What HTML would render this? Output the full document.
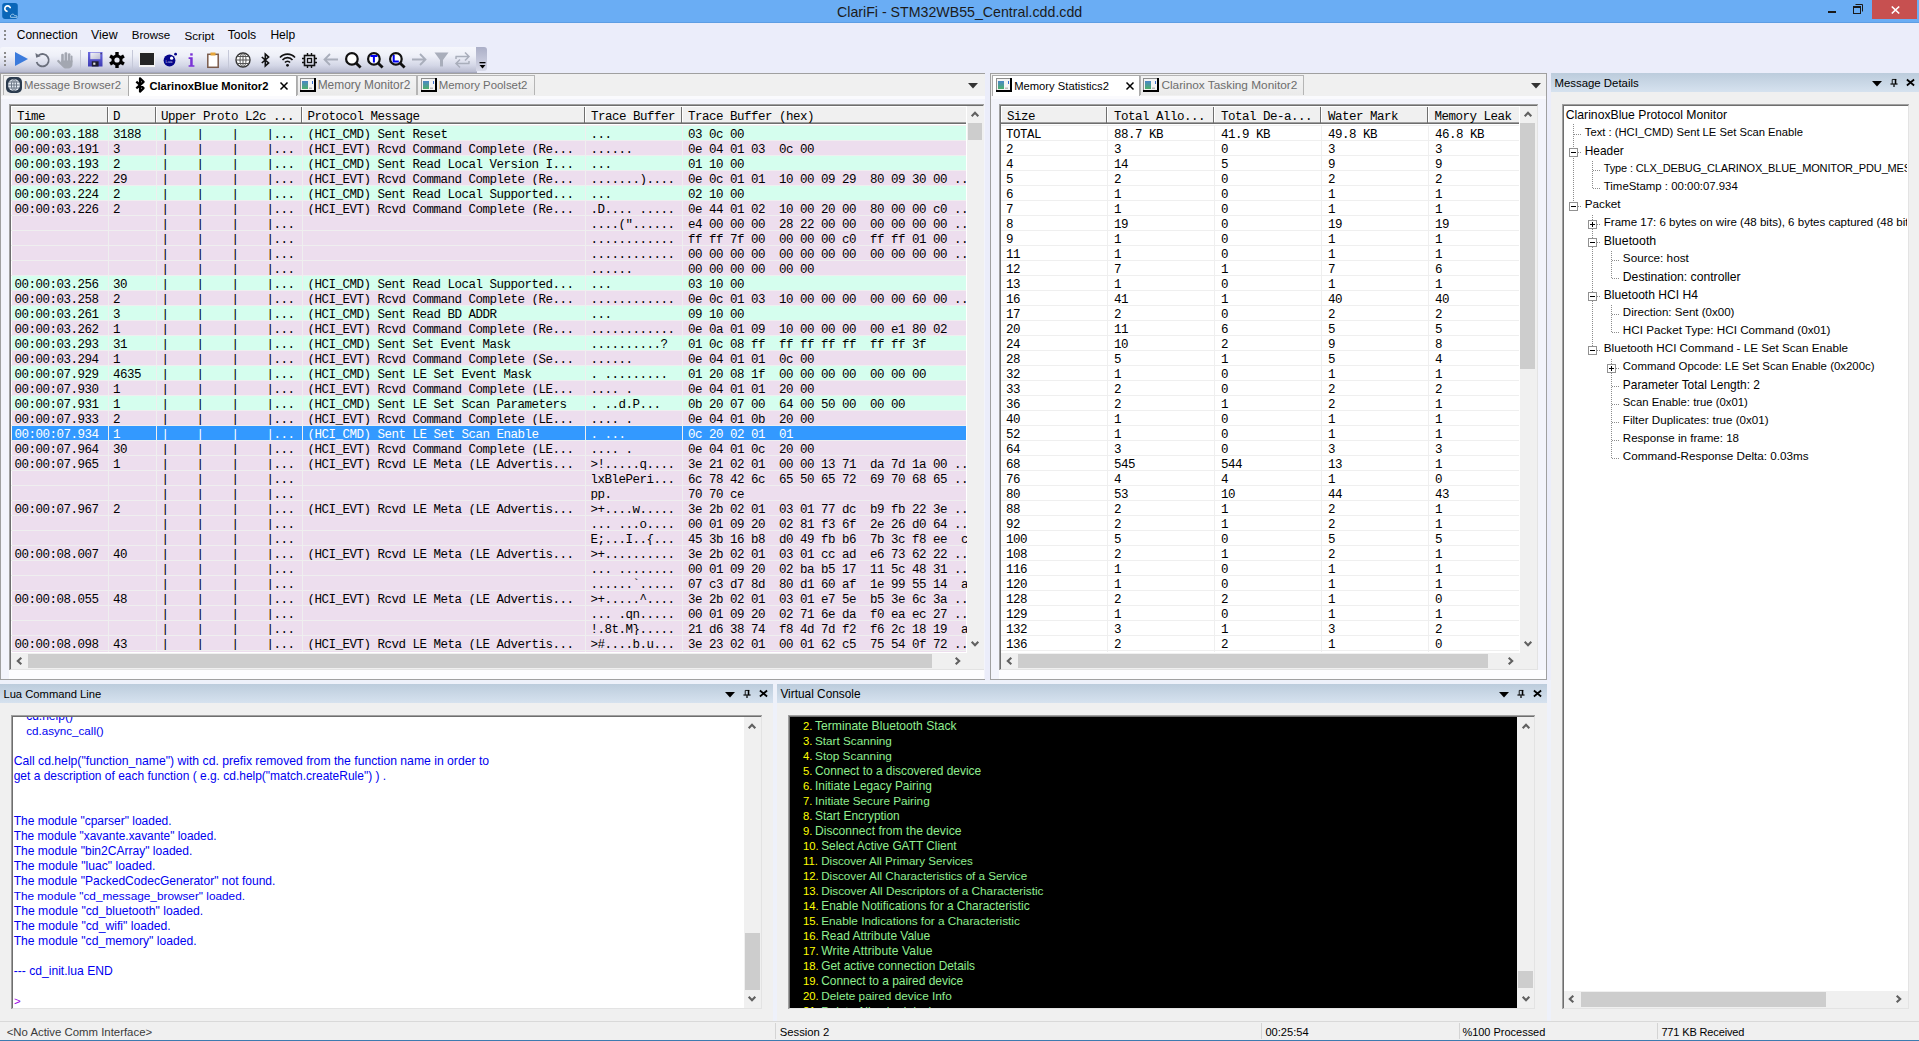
<!DOCTYPE html><html><head><meta charset="utf-8"><title>ClariFi</title><style>
*{box-sizing:border-box}
html,body{margin:0;padding:0}
body{width:1919px;height:1041px;position:relative;overflow:hidden;background:#EBEDFA;font-family:"Liberation Sans",sans-serif;font-size:12px;color:#000}
.a{position:absolute}
.t{position:absolute;white-space:pre;line-height:15px}
.m{position:absolute;font-family:"Liberation Mono",monospace;font-size:12.5px;letter-spacing:-0.5px;white-space:pre;line-height:15px}
svg{position:absolute;overflow:visible}
</style></head><body>
<div class="a" style="left:0px;top:0px;width:1919px;height:23px;background:#6AADF4"></div>
<div class="a" style="left:0px;top:22px;width:1919px;height:1px;background:#5D9EE4"></div>
<svg style="left:2px;top:3px" width="16" height="16" viewBox="0 0 16 16"><rect x="0.2" y="0" width="15.6" height="15.9" rx="2.8" fill="#0A66B8"/><path d="M8.2 4.5 A2.8 2.8 0 1 0 4.9 8.3" stroke="#fff" stroke-width="1.7" fill="none" stroke-linecap="round"/><path d="M8.6 14.3 H15 a1.3 1.3 0 0 0 -1.2 -1.7 H12.6 a2 2.2 0 0 0 -3.2 -0.9 a1.9 1.9 0 0 0 -0.8 2.6z" stroke="#9CC8EA" stroke-width="1" fill="none"/></svg>
<div class="t" style="left:837px;top:4px;font-size:14.2px;line-height:16px;color:#1B1B1B">ClariFi - STM32WB55_Central.cdd.cdd</div>
<div class="a" style="left:1828px;top:11px;width:8px;height:2px;background:#1A1A1A"></div>
<svg style="left:1853px;top:4px" width="11" height="11" viewBox="0 0 11 11"><rect x="0.5" y="2.5" width="7" height="7" fill="none" stroke="#1A1A1A" stroke-width="1"/><rect x="0.5" y="2.5" width="7" height="1.5" fill="#1A1A1A"/><path d="M2.5 0.5 H9.5 V7.5" fill="none" stroke="#1A1A1A" stroke-width="1"/></svg>
<div class="a" style="left:1872px;top:0px;width:45px;height:19px;background:#C75050"></div>
<svg style="left:1891px;top:6px" width="9" height="8" viewBox="0 0 9 8"><path d="M0.8 0.5 L8.2 7.5 M8.2 0.5 L0.8 7.5" stroke="#fff" stroke-width="1.7"/></svg>
<div class="a" style="left:0px;top:23px;width:1919px;height:24px;background:#EBEDFA"></div>
<div class="a" style="left:4px;top:30px;width:2px;height:2px;background:#8A8A8A"></div>
<div class="a" style="left:4px;top:34px;width:2px;height:2px;background:#8A8A8A"></div>
<div class="a" style="left:4px;top:38px;width:2px;height:2px;background:#8A8A8A"></div>
<div class="t" style="left:16.7px;top:28px;font-size:12.05px;letter-spacing:0.0px;line-height:15px;color:#000">Connection</div>
<div class="t" style="left:91.1px;top:28px;font-size:12.3px;letter-spacing:0.016px;line-height:15px;color:#000">View</div>
<div class="t" style="left:131.7px;top:28px;font-size:11.55px;letter-spacing:0.0px;line-height:15px;color:#000">Browse</div>
<div class="t" style="left:184.4px;top:28px;font-size:11.67px;letter-spacing:0.0px;line-height:15px;color:#000">Script</div>
<div class="t" style="left:227.7px;top:28px;font-size:12.22px;letter-spacing:0.0px;line-height:15px;color:#000">Tools</div>
<div class="t" style="left:270.4px;top:28px;font-size:12.06px;letter-spacing:0.0px;line-height:15px;color:#000">Help</div>
<div class="a" style="left:0;top:47px;width:477px;height:26px;border-radius:3px 0 0 0;background:linear-gradient(#F6F7FC 0%,#EEF0F8 35%,#D3D6E6 75%,#B8BBCF 100%);border-bottom:1px solid #A5A8BE"></div>
<div class="a" style="left:476px;top:47px;width:11px;height:24px;border-radius:0 3px 3px 0;background:linear-gradient(#ABAFC7,#D8DAE9)"></div>
<svg style="left:479px;top:62px" width="7" height="7" viewBox="0 0 7 7"><rect x="0.5" y="0" width="6" height="1.3" fill="#000"/><path d="M0.5 3 H6.5 L3.5 6.5z" fill="#000"/></svg>
<div class="a" style="left:4px;top:52px;width:2px;height:2px;background:#8A8A8A"></div>
<div class="a" style="left:4px;top:56px;width:2px;height:2px;background:#8A8A8A"></div>
<div class="a" style="left:4px;top:60px;width:2px;height:2px;background:#8A8A8A"></div>
<div class="a" style="left:4px;top:64px;width:2px;height:2px;background:#8A8A8A"></div>
<div class="a" style="left:80px;top:50px;width:1px;height:19px;background:#C5C8D8"></div>
<div class="a" style="left:132px;top:50px;width:1px;height:19px;background:#C5C8D8"></div>
<div class="a" style="left:228px;top:50px;width:1px;height:19px;background:#C5C8D8"></div>
<svg style="left:15px;top:52px" width="13" height="14" viewBox="0 0 13 14"><path d="M0 0 L13 7 L0 14z" fill="#3B7BDC"/></svg>
<svg style="left:35px;top:52px" width="15" height="16" viewBox="0 0 15 16"><path d="M3.6 3.4 A6.2 6.2 0 1 1 1.6 10" stroke="#6A6F7C" stroke-width="1.8" fill="none"/><path d="M0.4 1 L1.2 5.8 L5.6 4.2z" fill="#6A6F7C"/></svg>
<svg style="left:57px;top:52px" width="16" height="17" viewBox="0 0 16 17"><g fill="#A3A7B1"><rect x="4.2" y="1.8" width="2.6" height="9" rx="1.2"/><rect x="7.5" y="0.2" width="2.8" height="10" rx="1.3"/><rect x="11" y="1.2" width="2.4" height="9" rx="1.1"/><rect x="13.6" y="3.6" width="1.9" height="7" rx="0.9"/><path d="M4.2 8.5 H15.5 V12.2 a4.3 4.3 0 0 1 -4.3 4.3 H8.6 a3 3 0 0 1 -2.5 -1.3 L0.4 9.7 a1.1 1.1 0 0 1 1.7 -1.4 L4.2 10.6z"/></g></svg>
<svg style="left:88px;top:52px" width="15" height="15" viewBox="0 0 15 15"><defs><linearGradient id="fl" x1="0" y1="0" x2="1" y2="1"><stop offset="0" stop-color="#F4F4FA"/><stop offset="1" stop-color="#B8BAD0"/></linearGradient><linearGradient id="fb" x1="0" y1="0" x2="0" y2="1"><stop offset="0" stop-color="#6A68E0"/><stop offset="1" stop-color="#3E3CB4"/></linearGradient></defs><rect x="0" y="0" width="14.5" height="14.5" fill="url(#fb)"/><rect x="2.3" y="0.6" width="10" height="6.6" fill="url(#fl)"/><rect x="12.6" y="1.2" width="1" height="1" fill="#222"/><rect x="3.8" y="9.3" width="6.8" height="5.2" fill="#1E1E2E"/><rect x="5.2" y="10.6" width="2.2" height="2.2" fill="#E0E0E0"/></svg>
<svg style="left:109px;top:52px" width="16" height="16" viewBox="0 0 16 16"><g fill="#000"><circle cx="8" cy="8" r="5.5"/><rect x="6.3" y="0" width="3.4" height="16"/><rect x="6.3" y="0" width="3.4" height="16" transform="rotate(60 8 8)"/><rect x="6.3" y="0" width="3.4" height="16" transform="rotate(-60 8 8)"/></g><circle cx="8" cy="8" r="2.6" fill="#E8EAF4"/></svg>
<svg style="left:139px;top:52px" width="16" height="15" viewBox="0 0 16 15"><rect x="0" y="0" width="16" height="15" fill="#F4F4F4"/><rect x="1" y="1" width="14" height="12" fill="#252525"/></svg>
<svg style="left:163px;top:52px" width="15" height="15" viewBox="0 0 15 15"><circle cx="6.5" cy="8.5" r="5.9" fill="#06068A"/><circle cx="8.6" cy="6.2" r="1.6" fill="#fff"/><circle cx="12.6" cy="2.2" r="1.4" fill="#06068A"/><text x="2.4" y="11.3" font-size="4.2" fill="#C8C8F0" font-family="Liberation Sans">Lua</text></svg>
<svg style="left:188px;top:53px" width="7" height="14" viewBox="0 0 7 14"><rect x="2.2" y="0.3" width="2.5" height="2.3" fill="#7A32D6"/><path d="M0.6 4.3 H4.7 V12.2 H6.4 V13.8 H0.6 V12.2 H2.2 V5.9 H0.6z" fill="#7A32D6"/></svg>
<svg style="left:207px;top:52px" width="12" height="16" viewBox="0 0 12 16"><rect x="0.8" y="2.3" width="10.4" height="13" fill="#fff" stroke="#7A5A4A" stroke-width="1.5"/><rect x="3.5" y="0.5" width="5" height="3" fill="#E6A63A"/></svg>
<svg style="left:235px;top:52px" width="16" height="16" viewBox="0 0 16 16"><circle cx="8" cy="8" r="7" fill="#fff" stroke="#333" stroke-width="1.4"/><ellipse cx="8" cy="8" rx="3" ry="7" fill="none" stroke="#555" stroke-width="1"/><path d="M1 8 H15 M2 4.5 H14 M2 11.5 H14 M8 1 V15" stroke="#555" stroke-width="1"/></svg>
<svg style="left:261px;top:53px" width="9" height="14" viewBox="0 0 9 14"><path d="M0.8 4 L7.6 9.9 L4.3 13 V1 L7.6 4.1 L0.8 10" fill="none" stroke="#111" stroke-width="1.6"/></svg>
<svg style="left:279px;top:52px" width="17" height="15" viewBox="0 0 17 15"><path d="M1 5.5 A10 10 0 0 1 16 5.5 M3.5 8 A6.5 6.5 0 0 1 13.5 8 M6 10.5 A3.2 3.2 0 0 1 11 10.5" fill="none" stroke="#111" stroke-width="1.6"/><circle cx="8.5" cy="13.3" r="1.4" fill="#111"/></svg>
<svg style="left:302px;top:53px" width="15" height="15" viewBox="0 0 15 15"><rect x="2.5" y="2.5" width="10" height="10" fill="none" stroke="#111" stroke-width="1.6"/><rect x="5.5" y="5.5" width="4" height="4" fill="none" stroke="#111" stroke-width="1.3"/><path d="M5.5 0 V2.5 M9.5 0 V2.5 M5.5 12.5 V15 M9.5 12.5 V15 M0 5.5 H2.5 M0 9.5 H2.5 M12.5 5.5 H15 M12.5 9.5 H15" stroke="#111" stroke-width="1.4"/></svg>
<svg style="left:323px;top:53px" width="15" height="13" viewBox="0 0 15 13"><path d="M15 6.5 H2 M7 1 L1.5 6.5 L7 12" fill="none" stroke="#A9AEBB" stroke-width="1.8"/></svg>
<svg style="left:345px;top:52px" width="17" height="17" viewBox="0 0 17 17"><circle cx="6.9" cy="6.9" r="5.8" fill="#fff" stroke="#111" stroke-width="2.2"/><path d="M11 11 L15.6 15.6" stroke="#111" stroke-width="2.8"/></svg>
<svg style="left:367px;top:52px" width="17" height="17" viewBox="0 0 17 17"><circle cx="6.9" cy="6.9" r="5.8" fill="#fff" stroke="#111" stroke-width="2.2"/><path d="M11 11 L15.6 15.6" stroke="#111" stroke-width="2.8"/><path d="M3.4 3.9 H10.4 M6.9 3.9 V10.4" stroke="#0000F0" stroke-width="2"/></svg>
<svg style="left:389px;top:52px" width="17" height="17" viewBox="0 0 17 17"><circle cx="6.9" cy="6.9" r="5.8" fill="#fff" stroke="#111" stroke-width="2.2"/><path d="M11 11 L15.6 15.6" stroke="#111" stroke-width="2.8"/><path d="M4.7 3.0 V9.4 H9.8" stroke="#0000F0" stroke-width="2" fill="none"/></svg>
<svg style="left:412px;top:53px" width="15" height="13" viewBox="0 0 15 13"><path d="M0 6.5 H13 M8 1 L13.5 6.5 L8 12" fill="none" stroke="#A9AEBB" stroke-width="1.8"/></svg>
<svg style="left:434px;top:52px" width="15" height="15" viewBox="0 0 15 15"><path d="M0.5 0.5 H14.5 L9 8 V14.5 H6 V8z" fill="#A9AEBB"/></svg>
<svg style="left:455px;top:52px" width="15" height="16" viewBox="0 0 15 16"><path d="M0.5 4.5 H14 M10 0.5 L14 4.5 L10 8.5 M1 4.5 V7 M14.5 11.5 H1 M5 7.5 L1 11.5 L5 15.5 M14 11.5 V9" fill="none" stroke="#A9AEBB" stroke-width="1.5"/></svg>
<div class="a" style="left:0px;top:73px;width:985px;height:607px;border:1px solid #A0A0A0;background:#F3F4FB;border-right:none"></div>
<div class="a" style="left:1px;top:74px;width:984px;height:22px;background:#F0F0F0"></div>
<div class="a" style="left:1px;top:96px;width:984px;height:3px;background:#FAFAFD"></div>
<div class="a" style="left:3px;top:75px;width:126px;height:20px;background:linear-gradient(#F4F4F4,#EAEAEA);border:1px solid #B5B5B5;border-bottom:none"></div>
<div class="a" style="left:128px;top:75px;width:169px;height:21px;background:#fff;border:1px solid #ABABAB;border-bottom:none"></div>
<div class="a" style="left:297px;top:75px;width:120px;height:20px;background:linear-gradient(#F4F4F4,#EAEAEA);border:1px solid #B5B5B5;border-bottom:none"></div>
<div class="a" style="left:417px;top:75px;width:118px;height:20px;background:linear-gradient(#F4F4F4,#EAEAEA);border:1px solid #B5B5B5;border-bottom:none"></div>
<svg style="left:6px;top:77px" width="16" height="16" viewBox="0 0 16 16"><rect x="0" y="0" width="16" height="16" rx="5" fill="#2B3B4E"/><circle cx="8" cy="8" r="6" fill="#E8EEF5"/><ellipse cx="8" cy="8" rx="2.6" ry="6" fill="none" stroke="#606C7C" stroke-width="0.9"/><path d="M2 8 H14 M2.6 5 H13.4 M2.6 11 H13.4 M8 2 V14" stroke="#606C7C" stroke-width="0.9"/></svg>
<div class="t" style="left:24.0px;top:78px;font-size:11.33px;letter-spacing:0.0px;line-height:15px;color:#6D6D6D">Message Browser2</div>
<svg style="left:135px;top:77px" width="11" height="16" viewBox="0 0 11 16"><path d="M1.3 4.6 L8.6 11.1 L5 14.6 V1.4 L8.6 4.9 L1.3 11.4" fill="none" stroke="#000" stroke-width="2.2" stroke-linejoin="round"/></svg>
<div class="t" style="left:149.4px;top:79px;font-size:11.17px;letter-spacing:0.0px;line-height:15px;font-weight:bold;color:#000">ClarinoxBlue Monitor2</div>
<svg style="left:280px;top:82px" width="8" height="8" viewBox="0 0 8 8"><path d="M0.5 0.5 L7.5 7.5 M7.5 0.5 L0.5 7.5" stroke="#000" stroke-width="1.5"/></svg>
<svg style="left:300px;top:78px" width="16" height="14" viewBox="0 0 16 14"><defs><linearGradient id="dg" x1="0" y1="0" x2="0" y2="1"><stop offset="0" stop-color="#4A86C8"/><stop offset="1" stop-color="#4CAF6A"/></linearGradient></defs><rect x="0" y="0" width="16" height="14" fill="#000"/><rect x="0" y="0" width="14" height="12" fill="#F4F4F4"/><rect x="0" y="0" width="14" height="1" fill="#8E8E8E"/><rect x="0" y="0" width="1" height="12" fill="#8E8E8E"/><rect x="2" y="3" width="6" height="8" fill="url(#dg)"/><rect x="9" y="9.5" width="3" height="1.5" fill="#BBBBBB"/><rect x="12" y="3" width="1" height="3" fill="#3A6FD0"/></svg>
<div class="t" style="left:317.7px;top:78px;font-size:11.91px;letter-spacing:0.0px;line-height:15px;color:#6D6D6D">Memory Monitor2</div>
<svg style="left:421px;top:78px" width="16" height="14" viewBox="0 0 16 14"><defs><linearGradient id="dg" x1="0" y1="0" x2="0" y2="1"><stop offset="0" stop-color="#4A86C8"/><stop offset="1" stop-color="#4CAF6A"/></linearGradient></defs><rect x="0" y="0" width="16" height="14" fill="#000"/><rect x="0" y="0" width="14" height="12" fill="#F4F4F4"/><rect x="0" y="0" width="14" height="1" fill="#8E8E8E"/><rect x="0" y="0" width="1" height="12" fill="#8E8E8E"/><rect x="2" y="3" width="6" height="8" fill="url(#dg)"/><rect x="9" y="9.5" width="3" height="1.5" fill="#BBBBBB"/><rect x="12" y="3" width="1" height="3" fill="#3A6FD0"/></svg>
<div class="t" style="left:438.7px;top:78px;font-size:11.42px;letter-spacing:0.0px;line-height:15px;color:#6D6D6D">Memory Poolset2</div>
<svg style="left:968px;top:83px" width="10" height="6" viewBox="0 0 10 6"><path d="M0 0 H10 L5 5.5z" fill="#333"/></svg>
<div class="a" style="left:9px;top:104px;width:975px;height:566px;background:#fff;border-top:2px solid #6E6E6E;border-left:2px solid #6E6E6E;border-right:1px solid #E3E3E3;border-bottom:1px solid #E3E3E3"></div>
<div class="a" style="left:9px;top:104px;width:975px;height:1px;background:#A0A0A0"></div>
<div class="a" style="left:9px;top:104px;width:1px;height:566px;background:#A0A0A0"></div>
<div class="a" style="left:11px;top:106px;width:955px;height:18px;background:#F0F0F0"></div>
<div class="a" style="left:11px;top:106px;width:955px;height:1px;background:#fff"></div>
<div class="a" style="left:11px;top:122px;width:955px;height:1px;background:#A0A0A0"></div>
<div class="a" style="left:11px;top:123px;width:955px;height:1px;background:#6E6E6E"></div>
<div class="a" style="left:11px;top:107px;width:1px;height:15px;background:#fff"></div>
<div class="m" style="left:17px;top:109px;line-height:16px">Time</div>
<div class="a" style="left:108px;top:107px;width:1px;height:15px;background:#fff"></div>
<div class="a" style="left:107px;top:107px;width:1px;height:16px;background:#6E6E6E"></div>
<div class="m" style="left:113px;top:109px;line-height:16px">D</div>
<div class="a" style="left:156px;top:107px;width:1px;height:15px;background:#fff"></div>
<div class="a" style="left:155px;top:107px;width:1px;height:16px;background:#6E6E6E"></div>
<div class="m" style="left:161px;top:109px;line-height:16px">Upper Proto L2c ...</div>
<div class="a" style="left:302px;top:107px;width:1px;height:15px;background:#fff"></div>
<div class="a" style="left:301px;top:107px;width:1px;height:16px;background:#6E6E6E"></div>
<div class="m" style="left:307.5px;top:109px;line-height:16px">Protocol Message</div>
<div class="a" style="left:585px;top:107px;width:1px;height:15px;background:#fff"></div>
<div class="a" style="left:584px;top:107px;width:1px;height:16px;background:#6E6E6E"></div>
<div class="m" style="left:591px;top:109px;line-height:16px">Trace Buffer</div>
<div class="a" style="left:682px;top:107px;width:1px;height:15px;background:#fff"></div>
<div class="a" style="left:681px;top:107px;width:1px;height:16px;background:#6E6E6E"></div>
<div class="m" style="left:688px;top:109px;line-height:16px">Trace Buffer (hex)</div>
<div class="a" style="left:966px;top:107px;width:1px;height:16px;background:#fff"></div>
<div class="a" style="left:12px;top:126px;width:954px;height:14px;background:#D5FEEE"></div>
<div class="a" style="left:11px;top:125px;width:955px;height:1px;background:#EFEFEF"></div>
<div class="m" style="left:14.5px;top:127px;color:#000;line-height:16px">00:00:03.188</div>
<div class="m" style="left:113px;top:127px;color:#000;line-height:16px">3188</div>
<div class="m" style="left:161.5px;top:127px;color:#000;line-height:16px">|    |    |    |...</div>
<div class="m" style="left:307.5px;top:127px;color:#000;line-height:16px">(HCI_CMD) Sent Reset</div>
<div class="m" style="left:590.5px;top:127px;color:#000;line-height:16px">...</div>
<div class="m" style="left:688px;top:127px;color:#000;line-height:16px">03 0c 00</div>
<div class="a" style="left:12px;top:141px;width:954px;height:14px;background:#EDDEEE"></div>
<div class="a" style="left:11px;top:140px;width:955px;height:1px;background:#EFEFEF"></div>
<div class="m" style="left:14.5px;top:142px;color:#000;line-height:16px">00:00:03.191</div>
<div class="m" style="left:113px;top:142px;color:#000;line-height:16px">3</div>
<div class="m" style="left:161.5px;top:142px;color:#000;line-height:16px">|    |    |    |...</div>
<div class="m" style="left:307.5px;top:142px;color:#000;line-height:16px">(HCI_EVT) Rcvd Command Complete (Re...</div>
<div class="m" style="left:590.5px;top:142px;color:#000;line-height:16px">......</div>
<div class="m" style="left:688px;top:142px;color:#000;line-height:16px">0e 04 01 03  0c 00</div>
<div class="a" style="left:12px;top:156px;width:954px;height:14px;background:#D5FEEE"></div>
<div class="a" style="left:11px;top:155px;width:955px;height:1px;background:#EFEFEF"></div>
<div class="m" style="left:14.5px;top:157px;color:#000;line-height:16px">00:00:03.193</div>
<div class="m" style="left:113px;top:157px;color:#000;line-height:16px">2</div>
<div class="m" style="left:161.5px;top:157px;color:#000;line-height:16px">|    |    |    |...</div>
<div class="m" style="left:307.5px;top:157px;color:#000;line-height:16px">(HCI_CMD) Sent Read Local Version I...</div>
<div class="m" style="left:590.5px;top:157px;color:#000;line-height:16px">...</div>
<div class="m" style="left:688px;top:157px;color:#000;line-height:16px">01 10 00</div>
<div class="a" style="left:12px;top:171px;width:954px;height:14px;background:#EDDEEE"></div>
<div class="a" style="left:11px;top:170px;width:955px;height:1px;background:#EFEFEF"></div>
<div class="m" style="left:14.5px;top:172px;color:#000;line-height:16px">00:00:03.222</div>
<div class="m" style="left:113px;top:172px;color:#000;line-height:16px">29</div>
<div class="m" style="left:161.5px;top:172px;color:#000;line-height:16px">|    |    |    |...</div>
<div class="m" style="left:307.5px;top:172px;color:#000;line-height:16px">(HCI_EVT) Rcvd Command Complete (Re...</div>
<div class="m" style="left:590.5px;top:172px;color:#000;line-height:16px">.......)....</div>
<div class="m" style="left:688px;top:172px;color:#000;line-height:16px">0e 0c 01 01  10 00 09 29  80 09 30 00 ..</div>
<div class="a" style="left:12px;top:186px;width:954px;height:14px;background:#D5FEEE"></div>
<div class="a" style="left:11px;top:185px;width:955px;height:1px;background:#EFEFEF"></div>
<div class="m" style="left:14.5px;top:187px;color:#000;line-height:16px">00:00:03.224</div>
<div class="m" style="left:113px;top:187px;color:#000;line-height:16px">2</div>
<div class="m" style="left:161.5px;top:187px;color:#000;line-height:16px">|    |    |    |...</div>
<div class="m" style="left:307.5px;top:187px;color:#000;line-height:16px">(HCI_CMD) Sent Read Local Supported...</div>
<div class="m" style="left:590.5px;top:187px;color:#000;line-height:16px">...</div>
<div class="m" style="left:688px;top:187px;color:#000;line-height:16px">02 10 00</div>
<div class="a" style="left:12px;top:201px;width:954px;height:14px;background:#EDDEEE"></div>
<div class="a" style="left:11px;top:200px;width:955px;height:1px;background:#EFEFEF"></div>
<div class="m" style="left:14.5px;top:202px;color:#000;line-height:16px">00:00:03.226</div>
<div class="m" style="left:113px;top:202px;color:#000;line-height:16px">2</div>
<div class="m" style="left:161.5px;top:202px;color:#000;line-height:16px">|    |    |    |...</div>
<div class="m" style="left:307.5px;top:202px;color:#000;line-height:16px">(HCI_EVT) Rcvd Command Complete (Re...</div>
<div class="m" style="left:590.5px;top:202px;color:#000;line-height:16px">.D.... .....</div>
<div class="m" style="left:688px;top:202px;color:#000;line-height:16px">0e 44 01 02  10 00 20 00  80 00 00 c0 ..</div>
<div class="a" style="left:12px;top:216px;width:954px;height:14px;background:#EDDEEE"></div>
<div class="a" style="left:11px;top:215px;width:955px;height:1px;background:#EFEFEF"></div>
<div class="m" style="left:161.5px;top:217px;color:#000;line-height:16px">|    |    |    |...</div>
<div class="m" style="left:590.5px;top:217px;color:#000;line-height:16px">....(&quot;......</div>
<div class="m" style="left:688px;top:217px;color:#000;line-height:16px">e4 00 00 00  28 22 00 00  00 00 00 00 ..</div>
<div class="a" style="left:12px;top:231px;width:954px;height:14px;background:#EDDEEE"></div>
<div class="a" style="left:11px;top:230px;width:955px;height:1px;background:#EFEFEF"></div>
<div class="m" style="left:161.5px;top:232px;color:#000;line-height:16px">|    |    |    |...</div>
<div class="m" style="left:590.5px;top:232px;color:#000;line-height:16px">............</div>
<div class="m" style="left:688px;top:232px;color:#000;line-height:16px">ff ff 7f 00  00 00 00 c0  ff ff 01 00 ..</div>
<div class="a" style="left:12px;top:246px;width:954px;height:14px;background:#EDDEEE"></div>
<div class="a" style="left:11px;top:245px;width:955px;height:1px;background:#EFEFEF"></div>
<div class="m" style="left:161.5px;top:247px;color:#000;line-height:16px">|    |    |    |...</div>
<div class="m" style="left:590.5px;top:247px;color:#000;line-height:16px">............</div>
<div class="m" style="left:688px;top:247px;color:#000;line-height:16px">00 00 00 00  00 00 00 00  00 00 00 00 ..</div>
<div class="a" style="left:12px;top:261px;width:954px;height:14px;background:#EDDEEE"></div>
<div class="a" style="left:11px;top:260px;width:955px;height:1px;background:#EFEFEF"></div>
<div class="m" style="left:161.5px;top:262px;color:#000;line-height:16px">|    |    |    |...</div>
<div class="m" style="left:590.5px;top:262px;color:#000;line-height:16px">......</div>
<div class="m" style="left:688px;top:262px;color:#000;line-height:16px">00 00 00 00  00 00</div>
<div class="a" style="left:12px;top:276px;width:954px;height:14px;background:#D5FEEE"></div>
<div class="a" style="left:11px;top:275px;width:955px;height:1px;background:#EFEFEF"></div>
<div class="m" style="left:14.5px;top:277px;color:#000;line-height:16px">00:00:03.256</div>
<div class="m" style="left:113px;top:277px;color:#000;line-height:16px">30</div>
<div class="m" style="left:161.5px;top:277px;color:#000;line-height:16px">|    |    |    |...</div>
<div class="m" style="left:307.5px;top:277px;color:#000;line-height:16px">(HCI_CMD) Sent Read Local Supported...</div>
<div class="m" style="left:590.5px;top:277px;color:#000;line-height:16px">...</div>
<div class="m" style="left:688px;top:277px;color:#000;line-height:16px">03 10 00</div>
<div class="a" style="left:12px;top:291px;width:954px;height:14px;background:#EDDEEE"></div>
<div class="a" style="left:11px;top:290px;width:955px;height:1px;background:#EFEFEF"></div>
<div class="m" style="left:14.5px;top:292px;color:#000;line-height:16px">00:00:03.258</div>
<div class="m" style="left:113px;top:292px;color:#000;line-height:16px">2</div>
<div class="m" style="left:161.5px;top:292px;color:#000;line-height:16px">|    |    |    |...</div>
<div class="m" style="left:307.5px;top:292px;color:#000;line-height:16px">(HCI_EVT) Rcvd Command Complete (Re...</div>
<div class="m" style="left:590.5px;top:292px;color:#000;line-height:16px">............</div>
<div class="m" style="left:688px;top:292px;color:#000;line-height:16px">0e 0c 01 03  10 00 00 00  00 00 60 00 ..</div>
<div class="a" style="left:12px;top:306px;width:954px;height:14px;background:#D5FEEE"></div>
<div class="a" style="left:11px;top:305px;width:955px;height:1px;background:#EFEFEF"></div>
<div class="m" style="left:14.5px;top:307px;color:#000;line-height:16px">00:00:03.261</div>
<div class="m" style="left:113px;top:307px;color:#000;line-height:16px">3</div>
<div class="m" style="left:161.5px;top:307px;color:#000;line-height:16px">|    |    |    |...</div>
<div class="m" style="left:307.5px;top:307px;color:#000;line-height:16px">(HCI_CMD) Sent Read BD ADDR</div>
<div class="m" style="left:590.5px;top:307px;color:#000;line-height:16px">...</div>
<div class="m" style="left:688px;top:307px;color:#000;line-height:16px">09 10 00</div>
<div class="a" style="left:12px;top:321px;width:954px;height:14px;background:#EDDEEE"></div>
<div class="a" style="left:11px;top:320px;width:955px;height:1px;background:#EFEFEF"></div>
<div class="m" style="left:14.5px;top:322px;color:#000;line-height:16px">00:00:03.262</div>
<div class="m" style="left:113px;top:322px;color:#000;line-height:16px">1</div>
<div class="m" style="left:161.5px;top:322px;color:#000;line-height:16px">|    |    |    |...</div>
<div class="m" style="left:307.5px;top:322px;color:#000;line-height:16px">(HCI_EVT) Rcvd Command Complete (Re...</div>
<div class="m" style="left:590.5px;top:322px;color:#000;line-height:16px">............</div>
<div class="m" style="left:688px;top:322px;color:#000;line-height:16px">0e 0a 01 09  10 00 00 00  00 e1 80 02</div>
<div class="a" style="left:12px;top:336px;width:954px;height:14px;background:#D5FEEE"></div>
<div class="a" style="left:11px;top:335px;width:955px;height:1px;background:#EFEFEF"></div>
<div class="m" style="left:14.5px;top:337px;color:#000;line-height:16px">00:00:03.293</div>
<div class="m" style="left:113px;top:337px;color:#000;line-height:16px">31</div>
<div class="m" style="left:161.5px;top:337px;color:#000;line-height:16px">|    |    |    |...</div>
<div class="m" style="left:307.5px;top:337px;color:#000;line-height:16px">(HCI_CMD) Sent Set Event Mask</div>
<div class="m" style="left:590.5px;top:337px;color:#000;line-height:16px">..........?</div>
<div class="m" style="left:688px;top:337px;color:#000;line-height:16px">01 0c 08 ff  ff ff ff ff  ff ff 3f</div>
<div class="a" style="left:12px;top:351px;width:954px;height:14px;background:#EDDEEE"></div>
<div class="a" style="left:11px;top:350px;width:955px;height:1px;background:#EFEFEF"></div>
<div class="m" style="left:14.5px;top:352px;color:#000;line-height:16px">00:00:03.294</div>
<div class="m" style="left:113px;top:352px;color:#000;line-height:16px">1</div>
<div class="m" style="left:161.5px;top:352px;color:#000;line-height:16px">|    |    |    |...</div>
<div class="m" style="left:307.5px;top:352px;color:#000;line-height:16px">(HCI_EVT) Rcvd Command Complete (Se...</div>
<div class="m" style="left:590.5px;top:352px;color:#000;line-height:16px">......</div>
<div class="m" style="left:688px;top:352px;color:#000;line-height:16px">0e 04 01 01  0c 00</div>
<div class="a" style="left:12px;top:366px;width:954px;height:14px;background:#D5FEEE"></div>
<div class="a" style="left:11px;top:365px;width:955px;height:1px;background:#EFEFEF"></div>
<div class="m" style="left:14.5px;top:367px;color:#000;line-height:16px">00:00:07.929</div>
<div class="m" style="left:113px;top:367px;color:#000;line-height:16px">4635</div>
<div class="m" style="left:161.5px;top:367px;color:#000;line-height:16px">|    |    |    |...</div>
<div class="m" style="left:307.5px;top:367px;color:#000;line-height:16px">(HCI_CMD) Sent LE Set Event Mask</div>
<div class="m" style="left:590.5px;top:367px;color:#000;line-height:16px">. .........</div>
<div class="m" style="left:688px;top:367px;color:#000;line-height:16px">01 20 08 1f  00 00 00 00  00 00 00</div>
<div class="a" style="left:12px;top:381px;width:954px;height:14px;background:#EDDEEE"></div>
<div class="a" style="left:11px;top:380px;width:955px;height:1px;background:#EFEFEF"></div>
<div class="m" style="left:14.5px;top:382px;color:#000;line-height:16px">00:00:07.930</div>
<div class="m" style="left:113px;top:382px;color:#000;line-height:16px">1</div>
<div class="m" style="left:161.5px;top:382px;color:#000;line-height:16px">|    |    |    |...</div>
<div class="m" style="left:307.5px;top:382px;color:#000;line-height:16px">(HCI_EVT) Rcvd Command Complete (LE...</div>
<div class="m" style="left:590.5px;top:382px;color:#000;line-height:16px">.... .</div>
<div class="m" style="left:688px;top:382px;color:#000;line-height:16px">0e 04 01 01  20 00</div>
<div class="a" style="left:12px;top:396px;width:954px;height:14px;background:#D5FEEE"></div>
<div class="a" style="left:11px;top:395px;width:955px;height:1px;background:#EFEFEF"></div>
<div class="m" style="left:14.5px;top:397px;color:#000;line-height:16px">00:00:07.931</div>
<div class="m" style="left:113px;top:397px;color:#000;line-height:16px">1</div>
<div class="m" style="left:161.5px;top:397px;color:#000;line-height:16px">|    |    |    |...</div>
<div class="m" style="left:307.5px;top:397px;color:#000;line-height:16px">(HCI_CMD) Sent LE Set Scan Parameters</div>
<div class="m" style="left:590.5px;top:397px;color:#000;line-height:16px">. ..d.P...</div>
<div class="m" style="left:688px;top:397px;color:#000;line-height:16px">0b 20 07 00  64 00 50 00  00 00</div>
<div class="a" style="left:12px;top:411px;width:954px;height:14px;background:#EDDEEE"></div>
<div class="a" style="left:11px;top:410px;width:955px;height:1px;background:#EFEFEF"></div>
<div class="m" style="left:14.5px;top:412px;color:#000;line-height:16px">00:00:07.933</div>
<div class="m" style="left:113px;top:412px;color:#000;line-height:16px">2</div>
<div class="m" style="left:161.5px;top:412px;color:#000;line-height:16px">|    |    |    |...</div>
<div class="m" style="left:307.5px;top:412px;color:#000;line-height:16px">(HCI_EVT) Rcvd Command Complete (LE...</div>
<div class="m" style="left:590.5px;top:412px;color:#000;line-height:16px">.... .</div>
<div class="m" style="left:688px;top:412px;color:#000;line-height:16px">0e 04 01 0b  20 00</div>
<div class="a" style="left:12px;top:426px;width:954px;height:14px;background:#3399FF"></div>
<div class="a" style="left:11px;top:425px;width:955px;height:1px;background:#EFEFEF"></div>
<div class="m" style="left:14.5px;top:427px;color:#fff;line-height:16px">00:00:07.934</div>
<div class="m" style="left:113px;top:427px;color:#fff;line-height:16px">1</div>
<div class="m" style="left:161.5px;top:427px;color:#fff;line-height:16px">|    |    |    |...</div>
<div class="m" style="left:307.5px;top:427px;color:#fff;line-height:16px">(HCI_CMD) Sent LE Set Scan Enable</div>
<div class="m" style="left:590.5px;top:427px;color:#fff;line-height:16px">. ...</div>
<div class="m" style="left:688px;top:427px;color:#fff;line-height:16px">0c 20 02 01  01</div>
<div class="a" style="left:12px;top:441px;width:954px;height:14px;background:#EDDEEE"></div>
<div class="a" style="left:11px;top:440px;width:955px;height:1px;background:#EFEFEF"></div>
<div class="m" style="left:14.5px;top:442px;color:#000;line-height:16px">00:00:07.964</div>
<div class="m" style="left:113px;top:442px;color:#000;line-height:16px">30</div>
<div class="m" style="left:161.5px;top:442px;color:#000;line-height:16px">|    |    |    |...</div>
<div class="m" style="left:307.5px;top:442px;color:#000;line-height:16px">(HCI_EVT) Rcvd Command Complete (LE...</div>
<div class="m" style="left:590.5px;top:442px;color:#000;line-height:16px">.... .</div>
<div class="m" style="left:688px;top:442px;color:#000;line-height:16px">0e 04 01 0c  20 00</div>
<div class="a" style="left:12px;top:456px;width:954px;height:14px;background:#EDDEEE"></div>
<div class="a" style="left:11px;top:455px;width:955px;height:1px;background:#EFEFEF"></div>
<div class="m" style="left:14.5px;top:457px;color:#000;line-height:16px">00:00:07.965</div>
<div class="m" style="left:113px;top:457px;color:#000;line-height:16px">1</div>
<div class="m" style="left:161.5px;top:457px;color:#000;line-height:16px">|    |    |    |...</div>
<div class="m" style="left:307.5px;top:457px;color:#000;line-height:16px">(HCI_EVT) Rcvd LE Meta (LE Advertis...</div>
<div class="m" style="left:590.5px;top:457px;color:#000;line-height:16px">&gt;!.....q....</div>
<div class="m" style="left:688px;top:457px;color:#000;line-height:16px">3e 21 02 01  00 00 13 71  da 7d 1a 00 ..</div>
<div class="a" style="left:12px;top:471px;width:954px;height:14px;background:#EDDEEE"></div>
<div class="a" style="left:11px;top:470px;width:955px;height:1px;background:#EFEFEF"></div>
<div class="m" style="left:161.5px;top:472px;color:#000;line-height:16px">|    |    |    |...</div>
<div class="m" style="left:590.5px;top:472px;color:#000;line-height:16px">lxBlePeri...</div>
<div class="m" style="left:688px;top:472px;color:#000;line-height:16px">6c 78 42 6c  65 50 65 72  69 70 68 65 ..</div>
<div class="a" style="left:12px;top:486px;width:954px;height:14px;background:#EDDEEE"></div>
<div class="a" style="left:11px;top:485px;width:955px;height:1px;background:#EFEFEF"></div>
<div class="m" style="left:161.5px;top:487px;color:#000;line-height:16px">|    |    |    |...</div>
<div class="m" style="left:590.5px;top:487px;color:#000;line-height:16px">pp.</div>
<div class="m" style="left:688px;top:487px;color:#000;line-height:16px">70 70 ce</div>
<div class="a" style="left:12px;top:501px;width:954px;height:14px;background:#EDDEEE"></div>
<div class="a" style="left:11px;top:500px;width:955px;height:1px;background:#EFEFEF"></div>
<div class="m" style="left:14.5px;top:502px;color:#000;line-height:16px">00:00:07.967</div>
<div class="m" style="left:113px;top:502px;color:#000;line-height:16px">2</div>
<div class="m" style="left:161.5px;top:502px;color:#000;line-height:16px">|    |    |    |...</div>
<div class="m" style="left:307.5px;top:502px;color:#000;line-height:16px">(HCI_EVT) Rcvd LE Meta (LE Advertis...</div>
<div class="m" style="left:590.5px;top:502px;color:#000;line-height:16px">&gt;+....w.....</div>
<div class="m" style="left:688px;top:502px;color:#000;line-height:16px">3e 2b 02 01  03 01 77 dc  b9 fb 22 3e ..</div>
<div class="a" style="left:12px;top:516px;width:954px;height:14px;background:#EDDEEE"></div>
<div class="a" style="left:11px;top:515px;width:955px;height:1px;background:#EFEFEF"></div>
<div class="m" style="left:161.5px;top:517px;color:#000;line-height:16px">|    |    |    |...</div>
<div class="m" style="left:590.5px;top:517px;color:#000;line-height:16px">... ...o....</div>
<div class="m" style="left:688px;top:517px;color:#000;line-height:16px">00 01 09 20  02 81 f3 6f  2e 26 d0 64 ..</div>
<div class="a" style="left:12px;top:531px;width:954px;height:14px;background:#EDDEEE"></div>
<div class="a" style="left:11px;top:530px;width:955px;height:1px;background:#EFEFEF"></div>
<div class="m" style="left:161.5px;top:532px;color:#000;line-height:16px">|    |    |    |...</div>
<div class="m" style="left:590.5px;top:532px;color:#000;line-height:16px">E;...I..{...</div>
<div class="m" style="left:688px;top:532px;color:#000;line-height:16px">45 3b 16 b8  d0 49 fb b6  7b 3c f8 ee  c</div>
<div class="a" style="left:12px;top:546px;width:954px;height:14px;background:#EDDEEE"></div>
<div class="a" style="left:11px;top:545px;width:955px;height:1px;background:#EFEFEF"></div>
<div class="m" style="left:14.5px;top:547px;color:#000;line-height:16px">00:00:08.007</div>
<div class="m" style="left:113px;top:547px;color:#000;line-height:16px">40</div>
<div class="m" style="left:161.5px;top:547px;color:#000;line-height:16px">|    |    |    |...</div>
<div class="m" style="left:307.5px;top:547px;color:#000;line-height:16px">(HCI_EVT) Rcvd LE Meta (LE Advertis...</div>
<div class="m" style="left:590.5px;top:547px;color:#000;line-height:16px">&gt;+..........</div>
<div class="m" style="left:688px;top:547px;color:#000;line-height:16px">3e 2b 02 01  03 01 cc ad  e6 73 62 22 ..</div>
<div class="a" style="left:12px;top:561px;width:954px;height:14px;background:#EDDEEE"></div>
<div class="a" style="left:11px;top:560px;width:955px;height:1px;background:#EFEFEF"></div>
<div class="m" style="left:161.5px;top:562px;color:#000;line-height:16px">|    |    |    |...</div>
<div class="m" style="left:590.5px;top:562px;color:#000;line-height:16px">... ........</div>
<div class="m" style="left:688px;top:562px;color:#000;line-height:16px">00 01 09 20  02 ba b5 17  11 5c 48 31 ..</div>
<div class="a" style="left:12px;top:576px;width:954px;height:14px;background:#EDDEEE"></div>
<div class="a" style="left:11px;top:575px;width:955px;height:1px;background:#EFEFEF"></div>
<div class="m" style="left:161.5px;top:577px;color:#000;line-height:16px">|    |    |    |...</div>
<div class="m" style="left:590.5px;top:577px;color:#000;line-height:16px">......`.....</div>
<div class="m" style="left:688px;top:577px;color:#000;line-height:16px">07 c3 d7 8d  80 d1 60 af  1e 99 55 14  a</div>
<div class="a" style="left:12px;top:591px;width:954px;height:14px;background:#EDDEEE"></div>
<div class="a" style="left:11px;top:590px;width:955px;height:1px;background:#EFEFEF"></div>
<div class="m" style="left:14.5px;top:592px;color:#000;line-height:16px">00:00:08.055</div>
<div class="m" style="left:113px;top:592px;color:#000;line-height:16px">48</div>
<div class="m" style="left:161.5px;top:592px;color:#000;line-height:16px">|    |    |    |...</div>
<div class="m" style="left:307.5px;top:592px;color:#000;line-height:16px">(HCI_EVT) Rcvd LE Meta (LE Advertis...</div>
<div class="m" style="left:590.5px;top:592px;color:#000;line-height:16px">&gt;+.....^....</div>
<div class="m" style="left:688px;top:592px;color:#000;line-height:16px">3e 2b 02 01  03 01 e7 5e  b5 3e 6c 3a ..</div>
<div class="a" style="left:12px;top:606px;width:954px;height:14px;background:#EDDEEE"></div>
<div class="a" style="left:11px;top:605px;width:955px;height:1px;background:#EFEFEF"></div>
<div class="m" style="left:161.5px;top:607px;color:#000;line-height:16px">|    |    |    |...</div>
<div class="m" style="left:590.5px;top:607px;color:#000;line-height:16px">... .qn.....</div>
<div class="m" style="left:688px;top:607px;color:#000;line-height:16px">00 01 09 20  02 71 6e da  f0 ea ec 27 ..</div>
<div class="a" style="left:12px;top:621px;width:954px;height:14px;background:#EDDEEE"></div>
<div class="a" style="left:11px;top:620px;width:955px;height:1px;background:#EFEFEF"></div>
<div class="m" style="left:161.5px;top:622px;color:#000;line-height:16px">|    |    |    |...</div>
<div class="m" style="left:590.5px;top:622px;color:#000;line-height:16px">!.8t.M}.....</div>
<div class="m" style="left:688px;top:622px;color:#000;line-height:16px">21 d6 38 74  f8 4d 7d f2  f6 2c 18 19  a</div>
<div class="a" style="left:12px;top:636px;width:954px;height:14px;background:#EDDEEE"></div>
<div class="a" style="left:11px;top:635px;width:955px;height:1px;background:#EFEFEF"></div>
<div class="m" style="left:14.5px;top:637px;color:#000;line-height:16px">00:00:08.098</div>
<div class="m" style="left:113px;top:637px;color:#000;line-height:16px">43</div>
<div class="m" style="left:161.5px;top:637px;color:#000;line-height:16px">|    |    |    |...</div>
<div class="m" style="left:307.5px;top:637px;color:#000;line-height:16px">(HCI_EVT) Rcvd LE Meta (LE Advertis...</div>
<div class="m" style="left:590.5px;top:637px;color:#000;line-height:16px">&gt;#....b.u...</div>
<div class="m" style="left:688px;top:637px;color:#000;line-height:16px">3e 23 02 01  00 01 62 c5  75 54 0f 72 ..</div>
<div class="a" style="left:11px;top:650px;width:955px;height:1px;background:#EFEFEF"></div>
<div class="a" style="left:12px;top:651px;width:954px;height:1px;background:#EDDEEE"></div>
<div class="a" style="left:108px;top:125px;width:1px;height:527px;background:#EFEFEF"></div>
<div class="a" style="left:156px;top:125px;width:1px;height:527px;background:#EFEFEF"></div>
<div class="a" style="left:302px;top:125px;width:1px;height:527px;background:#EFEFEF"></div>
<div class="a" style="left:585px;top:125px;width:1px;height:527px;background:#EFEFEF"></div>
<div class="a" style="left:682px;top:125px;width:1px;height:527px;background:#EFEFEF"></div>
<div class="a" style="left:967px;top:106px;width:17px;height:547px;background:#F0F0F0"></div>
<svg style="left:971px;top:111px" width="8" height="6" viewBox="0 0 8 6"><path d="M0.7 5.3 L4 1.8 L7.3 5.3" fill="none" stroke="#606060" stroke-width="2.1"/></svg>
<svg style="left:971px;top:641px" width="8" height="6" viewBox="0 0 8 6"><path d="M0.7 0.7 L4 4.2 L7.3 0.7" fill="none" stroke="#606060" stroke-width="2.1"/></svg>
<div class="a" style="left:968px;top:123px;width:14px;height:17px;background:#CDCDCD"></div>
<div class="a" style="left:11px;top:653px;width:973px;height:16px;background:#F0F0F0"></div>
<svg style="left:16px;top:657px" width="6" height="8" viewBox="0 0 6 8"><path d="M5.3 0.7 L1.8 4 L5.3 7.3" fill="none" stroke="#606060" stroke-width="2.1"/></svg>
<svg style="left:955px;top:657px" width="6" height="8" viewBox="0 0 6 8"><path d="M0.7 0.7 L4.2 4 L0.7 7.3" fill="none" stroke="#606060" stroke-width="2.1"/></svg>
<div class="a" style="left:28px;top:654px;width:904px;height:14px;background:#CDCDCD"></div>
<div class="a" style="left:9px;top:670px;width:975px;height:9px;background:#FDFDFE"></div>
<div class="a" style="left:990px;top:73px;width:557px;height:607px;border:1px solid #A0A0A0;background:#F3F4FB"></div>
<div class="a" style="left:991px;top:74px;width:555px;height:22px;background:#F0F0F0"></div>
<div class="a" style="left:991px;top:96px;width:555px;height:3px;background:#FAFAFD"></div>
<div class="a" style="left:992px;top:75px;width:148px;height:21px;background:#fff;border:1px solid #ABABAB;border-bottom:none"></div>
<div class="a" style="left:1140px;top:75px;width:164px;height:20px;background:linear-gradient(#F4F4F4,#EAEAEA);border:1px solid #B5B5B5;border-bottom:none"></div>
<svg style="left:996px;top:78px" width="16" height="14" viewBox="0 0 16 14"><defs><linearGradient id="dg" x1="0" y1="0" x2="0" y2="1"><stop offset="0" stop-color="#4A86C8"/><stop offset="1" stop-color="#4CAF6A"/></linearGradient></defs><rect x="0" y="0" width="16" height="14" fill="#000"/><rect x="0" y="0" width="14" height="12" fill="#F4F4F4"/><rect x="0" y="0" width="14" height="1" fill="#8E8E8E"/><rect x="0" y="0" width="1" height="12" fill="#8E8E8E"/><rect x="2" y="3" width="6" height="8" fill="url(#dg)"/><rect x="9" y="9.5" width="3" height="1.5" fill="#BBBBBB"/><rect x="12" y="3" width="1" height="3" fill="#3A6FD0"/></svg>
<div class="t" style="left:1014.2px;top:79px;font-size:11.22px;letter-spacing:0.0px;line-height:15px;color:#000">Memory Statistics2</div>
<svg style="left:1126px;top:82px" width="8" height="8" viewBox="0 0 8 8"><path d="M0.5 0.5 L7.5 7.5 M7.5 0.5 L0.5 7.5" stroke="#000" stroke-width="1.5"/></svg>
<svg style="left:1143px;top:78px" width="16" height="14" viewBox="0 0 16 14"><defs><linearGradient id="dg" x1="0" y1="0" x2="0" y2="1"><stop offset="0" stop-color="#4A86C8"/><stop offset="1" stop-color="#4CAF6A"/></linearGradient></defs><rect x="0" y="0" width="16" height="14" fill="#000"/><rect x="0" y="0" width="14" height="12" fill="#F4F4F4"/><rect x="0" y="0" width="14" height="1" fill="#8E8E8E"/><rect x="0" y="0" width="1" height="12" fill="#8E8E8E"/><rect x="2" y="3" width="6" height="8" fill="url(#dg)"/><rect x="9" y="9.5" width="3" height="1.5" fill="#BBBBBB"/><rect x="12" y="3" width="1" height="3" fill="#3A6FD0"/></svg>
<div class="t" style="left:1161.4px;top:78px;font-size:11.84px;letter-spacing:0.0px;line-height:15px;color:#6D6D6D">Clarinox Tasking Monitor2</div>
<svg style="left:1531px;top:83px" width="10" height="6" viewBox="0 0 10 6"><path d="M0 0 H10 L5 5.5z" fill="#333"/></svg>
<div class="a" style="left:999px;top:104px;width:539px;height:566px;background:#fff;border-top:2px solid #6E6E6E;border-left:2px solid #6E6E6E;border-right:1px solid #E3E3E3;border-bottom:1px solid #E3E3E3"></div>
<div class="a" style="left:999px;top:104px;width:539px;height:1px;background:#A0A0A0"></div>
<div class="a" style="left:999px;top:104px;width:1px;height:566px;background:#A0A0A0"></div>
<div class="a" style="left:1001px;top:106px;width:518px;height:18px;background:#F0F0F0"></div>
<div class="a" style="left:1001px;top:106px;width:518px;height:1px;background:#fff"></div>
<div class="a" style="left:1001px;top:122px;width:518px;height:1px;background:#A0A0A0"></div>
<div class="a" style="left:1001px;top:123px;width:518px;height:1px;background:#6E6E6E"></div>
<div class="a" style="left:1001px;top:107px;width:1px;height:15px;background:#fff"></div>
<div class="m" style="left:1007px;top:109px;line-height:16px">Size</div>
<div class="a" style="left:1107px;top:107px;width:1px;height:15px;background:#fff"></div>
<div class="a" style="left:1106px;top:107px;width:1px;height:16px;background:#6E6E6E"></div>
<div class="m" style="left:1114px;top:109px;line-height:16px">Total Allo...</div>
<div class="a" style="left:1214px;top:107px;width:1px;height:15px;background:#fff"></div>
<div class="a" style="left:1213px;top:107px;width:1px;height:16px;background:#6E6E6E"></div>
<div class="m" style="left:1221px;top:109px;line-height:16px">Total De-a...</div>
<div class="a" style="left:1321px;top:107px;width:1px;height:15px;background:#fff"></div>
<div class="a" style="left:1320px;top:107px;width:1px;height:16px;background:#6E6E6E"></div>
<div class="m" style="left:1328px;top:109px;line-height:16px">Water Mark</div>
<div class="a" style="left:1428px;top:107px;width:1px;height:15px;background:#fff"></div>
<div class="a" style="left:1427px;top:107px;width:1px;height:16px;background:#6E6E6E"></div>
<div class="m" style="left:1434.5px;top:109px;line-height:16px">Memory Leak</div>
<div class="a" style="left:1519px;top:107px;width:1px;height:16px;background:#fff"></div>
<div class="a" style="left:1001px;top:125px;width:518px;height:1px;background:#EFEFEF"></div>
<div class="m" style="left:1006px;top:127px;line-height:16px">TOTAL</div>
<div class="m" style="left:1114px;top:127px;line-height:16px">88.7 KB</div>
<div class="m" style="left:1221px;top:127px;line-height:16px">41.9 KB</div>
<div class="m" style="left:1328px;top:127px;line-height:16px">49.8 KB</div>
<div class="m" style="left:1435px;top:127px;line-height:16px">46.8 KB</div>
<div class="a" style="left:1001px;top:140px;width:518px;height:1px;background:#EFEFEF"></div>
<div class="m" style="left:1006px;top:142px;line-height:16px">2</div>
<div class="m" style="left:1114px;top:142px;line-height:16px">3</div>
<div class="m" style="left:1221px;top:142px;line-height:16px">0</div>
<div class="m" style="left:1328px;top:142px;line-height:16px">3</div>
<div class="m" style="left:1435px;top:142px;line-height:16px">3</div>
<div class="a" style="left:1001px;top:155px;width:518px;height:1px;background:#EFEFEF"></div>
<div class="m" style="left:1006px;top:157px;line-height:16px">4</div>
<div class="m" style="left:1114px;top:157px;line-height:16px">14</div>
<div class="m" style="left:1221px;top:157px;line-height:16px">5</div>
<div class="m" style="left:1328px;top:157px;line-height:16px">9</div>
<div class="m" style="left:1435px;top:157px;line-height:16px">9</div>
<div class="a" style="left:1001px;top:170px;width:518px;height:1px;background:#EFEFEF"></div>
<div class="m" style="left:1006px;top:172px;line-height:16px">5</div>
<div class="m" style="left:1114px;top:172px;line-height:16px">2</div>
<div class="m" style="left:1221px;top:172px;line-height:16px">0</div>
<div class="m" style="left:1328px;top:172px;line-height:16px">2</div>
<div class="m" style="left:1435px;top:172px;line-height:16px">2</div>
<div class="a" style="left:1001px;top:185px;width:518px;height:1px;background:#EFEFEF"></div>
<div class="m" style="left:1006px;top:187px;line-height:16px">6</div>
<div class="m" style="left:1114px;top:187px;line-height:16px">1</div>
<div class="m" style="left:1221px;top:187px;line-height:16px">0</div>
<div class="m" style="left:1328px;top:187px;line-height:16px">1</div>
<div class="m" style="left:1435px;top:187px;line-height:16px">1</div>
<div class="a" style="left:1001px;top:200px;width:518px;height:1px;background:#EFEFEF"></div>
<div class="m" style="left:1006px;top:202px;line-height:16px">7</div>
<div class="m" style="left:1114px;top:202px;line-height:16px">1</div>
<div class="m" style="left:1221px;top:202px;line-height:16px">0</div>
<div class="m" style="left:1328px;top:202px;line-height:16px">1</div>
<div class="m" style="left:1435px;top:202px;line-height:16px">1</div>
<div class="a" style="left:1001px;top:215px;width:518px;height:1px;background:#EFEFEF"></div>
<div class="m" style="left:1006px;top:217px;line-height:16px">8</div>
<div class="m" style="left:1114px;top:217px;line-height:16px">19</div>
<div class="m" style="left:1221px;top:217px;line-height:16px">0</div>
<div class="m" style="left:1328px;top:217px;line-height:16px">19</div>
<div class="m" style="left:1435px;top:217px;line-height:16px">19</div>
<div class="a" style="left:1001px;top:230px;width:518px;height:1px;background:#EFEFEF"></div>
<div class="m" style="left:1006px;top:232px;line-height:16px">9</div>
<div class="m" style="left:1114px;top:232px;line-height:16px">1</div>
<div class="m" style="left:1221px;top:232px;line-height:16px">0</div>
<div class="m" style="left:1328px;top:232px;line-height:16px">1</div>
<div class="m" style="left:1435px;top:232px;line-height:16px">1</div>
<div class="a" style="left:1001px;top:245px;width:518px;height:1px;background:#EFEFEF"></div>
<div class="m" style="left:1006px;top:247px;line-height:16px">11</div>
<div class="m" style="left:1114px;top:247px;line-height:16px">1</div>
<div class="m" style="left:1221px;top:247px;line-height:16px">0</div>
<div class="m" style="left:1328px;top:247px;line-height:16px">1</div>
<div class="m" style="left:1435px;top:247px;line-height:16px">1</div>
<div class="a" style="left:1001px;top:260px;width:518px;height:1px;background:#EFEFEF"></div>
<div class="m" style="left:1006px;top:262px;line-height:16px">12</div>
<div class="m" style="left:1114px;top:262px;line-height:16px">7</div>
<div class="m" style="left:1221px;top:262px;line-height:16px">1</div>
<div class="m" style="left:1328px;top:262px;line-height:16px">7</div>
<div class="m" style="left:1435px;top:262px;line-height:16px">6</div>
<div class="a" style="left:1001px;top:275px;width:518px;height:1px;background:#EFEFEF"></div>
<div class="m" style="left:1006px;top:277px;line-height:16px">13</div>
<div class="m" style="left:1114px;top:277px;line-height:16px">1</div>
<div class="m" style="left:1221px;top:277px;line-height:16px">0</div>
<div class="m" style="left:1328px;top:277px;line-height:16px">1</div>
<div class="m" style="left:1435px;top:277px;line-height:16px">1</div>
<div class="a" style="left:1001px;top:290px;width:518px;height:1px;background:#EFEFEF"></div>
<div class="m" style="left:1006px;top:292px;line-height:16px">16</div>
<div class="m" style="left:1114px;top:292px;line-height:16px">41</div>
<div class="m" style="left:1221px;top:292px;line-height:16px">1</div>
<div class="m" style="left:1328px;top:292px;line-height:16px">40</div>
<div class="m" style="left:1435px;top:292px;line-height:16px">40</div>
<div class="a" style="left:1001px;top:305px;width:518px;height:1px;background:#EFEFEF"></div>
<div class="m" style="left:1006px;top:307px;line-height:16px">17</div>
<div class="m" style="left:1114px;top:307px;line-height:16px">2</div>
<div class="m" style="left:1221px;top:307px;line-height:16px">0</div>
<div class="m" style="left:1328px;top:307px;line-height:16px">2</div>
<div class="m" style="left:1435px;top:307px;line-height:16px">2</div>
<div class="a" style="left:1001px;top:320px;width:518px;height:1px;background:#EFEFEF"></div>
<div class="m" style="left:1006px;top:322px;line-height:16px">20</div>
<div class="m" style="left:1114px;top:322px;line-height:16px">11</div>
<div class="m" style="left:1221px;top:322px;line-height:16px">6</div>
<div class="m" style="left:1328px;top:322px;line-height:16px">5</div>
<div class="m" style="left:1435px;top:322px;line-height:16px">5</div>
<div class="a" style="left:1001px;top:335px;width:518px;height:1px;background:#EFEFEF"></div>
<div class="m" style="left:1006px;top:337px;line-height:16px">24</div>
<div class="m" style="left:1114px;top:337px;line-height:16px">10</div>
<div class="m" style="left:1221px;top:337px;line-height:16px">2</div>
<div class="m" style="left:1328px;top:337px;line-height:16px">9</div>
<div class="m" style="left:1435px;top:337px;line-height:16px">8</div>
<div class="a" style="left:1001px;top:350px;width:518px;height:1px;background:#EFEFEF"></div>
<div class="m" style="left:1006px;top:352px;line-height:16px">28</div>
<div class="m" style="left:1114px;top:352px;line-height:16px">5</div>
<div class="m" style="left:1221px;top:352px;line-height:16px">1</div>
<div class="m" style="left:1328px;top:352px;line-height:16px">5</div>
<div class="m" style="left:1435px;top:352px;line-height:16px">4</div>
<div class="a" style="left:1001px;top:365px;width:518px;height:1px;background:#EFEFEF"></div>
<div class="m" style="left:1006px;top:367px;line-height:16px">32</div>
<div class="m" style="left:1114px;top:367px;line-height:16px">1</div>
<div class="m" style="left:1221px;top:367px;line-height:16px">0</div>
<div class="m" style="left:1328px;top:367px;line-height:16px">1</div>
<div class="m" style="left:1435px;top:367px;line-height:16px">1</div>
<div class="a" style="left:1001px;top:380px;width:518px;height:1px;background:#EFEFEF"></div>
<div class="m" style="left:1006px;top:382px;line-height:16px">33</div>
<div class="m" style="left:1114px;top:382px;line-height:16px">2</div>
<div class="m" style="left:1221px;top:382px;line-height:16px">0</div>
<div class="m" style="left:1328px;top:382px;line-height:16px">2</div>
<div class="m" style="left:1435px;top:382px;line-height:16px">2</div>
<div class="a" style="left:1001px;top:395px;width:518px;height:1px;background:#EFEFEF"></div>
<div class="m" style="left:1006px;top:397px;line-height:16px">36</div>
<div class="m" style="left:1114px;top:397px;line-height:16px">2</div>
<div class="m" style="left:1221px;top:397px;line-height:16px">1</div>
<div class="m" style="left:1328px;top:397px;line-height:16px">2</div>
<div class="m" style="left:1435px;top:397px;line-height:16px">1</div>
<div class="a" style="left:1001px;top:410px;width:518px;height:1px;background:#EFEFEF"></div>
<div class="m" style="left:1006px;top:412px;line-height:16px">40</div>
<div class="m" style="left:1114px;top:412px;line-height:16px">1</div>
<div class="m" style="left:1221px;top:412px;line-height:16px">0</div>
<div class="m" style="left:1328px;top:412px;line-height:16px">1</div>
<div class="m" style="left:1435px;top:412px;line-height:16px">1</div>
<div class="a" style="left:1001px;top:425px;width:518px;height:1px;background:#EFEFEF"></div>
<div class="m" style="left:1006px;top:427px;line-height:16px">52</div>
<div class="m" style="left:1114px;top:427px;line-height:16px">1</div>
<div class="m" style="left:1221px;top:427px;line-height:16px">0</div>
<div class="m" style="left:1328px;top:427px;line-height:16px">1</div>
<div class="m" style="left:1435px;top:427px;line-height:16px">1</div>
<div class="a" style="left:1001px;top:440px;width:518px;height:1px;background:#EFEFEF"></div>
<div class="m" style="left:1006px;top:442px;line-height:16px">64</div>
<div class="m" style="left:1114px;top:442px;line-height:16px">3</div>
<div class="m" style="left:1221px;top:442px;line-height:16px">0</div>
<div class="m" style="left:1328px;top:442px;line-height:16px">3</div>
<div class="m" style="left:1435px;top:442px;line-height:16px">3</div>
<div class="a" style="left:1001px;top:455px;width:518px;height:1px;background:#EFEFEF"></div>
<div class="m" style="left:1006px;top:457px;line-height:16px">68</div>
<div class="m" style="left:1114px;top:457px;line-height:16px">545</div>
<div class="m" style="left:1221px;top:457px;line-height:16px">544</div>
<div class="m" style="left:1328px;top:457px;line-height:16px">13</div>
<div class="m" style="left:1435px;top:457px;line-height:16px">1</div>
<div class="a" style="left:1001px;top:470px;width:518px;height:1px;background:#EFEFEF"></div>
<div class="m" style="left:1006px;top:472px;line-height:16px">76</div>
<div class="m" style="left:1114px;top:472px;line-height:16px">4</div>
<div class="m" style="left:1221px;top:472px;line-height:16px">4</div>
<div class="m" style="left:1328px;top:472px;line-height:16px">1</div>
<div class="m" style="left:1435px;top:472px;line-height:16px">0</div>
<div class="a" style="left:1001px;top:485px;width:518px;height:1px;background:#EFEFEF"></div>
<div class="m" style="left:1006px;top:487px;line-height:16px">80</div>
<div class="m" style="left:1114px;top:487px;line-height:16px">53</div>
<div class="m" style="left:1221px;top:487px;line-height:16px">10</div>
<div class="m" style="left:1328px;top:487px;line-height:16px">44</div>
<div class="m" style="left:1435px;top:487px;line-height:16px">43</div>
<div class="a" style="left:1001px;top:500px;width:518px;height:1px;background:#EFEFEF"></div>
<div class="m" style="left:1006px;top:502px;line-height:16px">88</div>
<div class="m" style="left:1114px;top:502px;line-height:16px">2</div>
<div class="m" style="left:1221px;top:502px;line-height:16px">1</div>
<div class="m" style="left:1328px;top:502px;line-height:16px">2</div>
<div class="m" style="left:1435px;top:502px;line-height:16px">1</div>
<div class="a" style="left:1001px;top:515px;width:518px;height:1px;background:#EFEFEF"></div>
<div class="m" style="left:1006px;top:517px;line-height:16px">92</div>
<div class="m" style="left:1114px;top:517px;line-height:16px">2</div>
<div class="m" style="left:1221px;top:517px;line-height:16px">1</div>
<div class="m" style="left:1328px;top:517px;line-height:16px">2</div>
<div class="m" style="left:1435px;top:517px;line-height:16px">1</div>
<div class="a" style="left:1001px;top:530px;width:518px;height:1px;background:#EFEFEF"></div>
<div class="m" style="left:1006px;top:532px;line-height:16px">100</div>
<div class="m" style="left:1114px;top:532px;line-height:16px">5</div>
<div class="m" style="left:1221px;top:532px;line-height:16px">0</div>
<div class="m" style="left:1328px;top:532px;line-height:16px">5</div>
<div class="m" style="left:1435px;top:532px;line-height:16px">5</div>
<div class="a" style="left:1001px;top:545px;width:518px;height:1px;background:#EFEFEF"></div>
<div class="m" style="left:1006px;top:547px;line-height:16px">108</div>
<div class="m" style="left:1114px;top:547px;line-height:16px">2</div>
<div class="m" style="left:1221px;top:547px;line-height:16px">1</div>
<div class="m" style="left:1328px;top:547px;line-height:16px">2</div>
<div class="m" style="left:1435px;top:547px;line-height:16px">1</div>
<div class="a" style="left:1001px;top:560px;width:518px;height:1px;background:#EFEFEF"></div>
<div class="m" style="left:1006px;top:562px;line-height:16px">116</div>
<div class="m" style="left:1114px;top:562px;line-height:16px">1</div>
<div class="m" style="left:1221px;top:562px;line-height:16px">0</div>
<div class="m" style="left:1328px;top:562px;line-height:16px">1</div>
<div class="m" style="left:1435px;top:562px;line-height:16px">1</div>
<div class="a" style="left:1001px;top:575px;width:518px;height:1px;background:#EFEFEF"></div>
<div class="m" style="left:1006px;top:577px;line-height:16px">120</div>
<div class="m" style="left:1114px;top:577px;line-height:16px">1</div>
<div class="m" style="left:1221px;top:577px;line-height:16px">0</div>
<div class="m" style="left:1328px;top:577px;line-height:16px">1</div>
<div class="m" style="left:1435px;top:577px;line-height:16px">1</div>
<div class="a" style="left:1001px;top:590px;width:518px;height:1px;background:#EFEFEF"></div>
<div class="m" style="left:1006px;top:592px;line-height:16px">128</div>
<div class="m" style="left:1114px;top:592px;line-height:16px">2</div>
<div class="m" style="left:1221px;top:592px;line-height:16px">2</div>
<div class="m" style="left:1328px;top:592px;line-height:16px">1</div>
<div class="m" style="left:1435px;top:592px;line-height:16px">0</div>
<div class="a" style="left:1001px;top:605px;width:518px;height:1px;background:#EFEFEF"></div>
<div class="m" style="left:1006px;top:607px;line-height:16px">129</div>
<div class="m" style="left:1114px;top:607px;line-height:16px">1</div>
<div class="m" style="left:1221px;top:607px;line-height:16px">0</div>
<div class="m" style="left:1328px;top:607px;line-height:16px">1</div>
<div class="m" style="left:1435px;top:607px;line-height:16px">1</div>
<div class="a" style="left:1001px;top:620px;width:518px;height:1px;background:#EFEFEF"></div>
<div class="m" style="left:1006px;top:622px;line-height:16px">132</div>
<div class="m" style="left:1114px;top:622px;line-height:16px">3</div>
<div class="m" style="left:1221px;top:622px;line-height:16px">1</div>
<div class="m" style="left:1328px;top:622px;line-height:16px">3</div>
<div class="m" style="left:1435px;top:622px;line-height:16px">2</div>
<div class="a" style="left:1001px;top:635px;width:518px;height:1px;background:#EFEFEF"></div>
<div class="m" style="left:1006px;top:637px;line-height:16px">136</div>
<div class="m" style="left:1114px;top:637px;line-height:16px">2</div>
<div class="m" style="left:1221px;top:637px;line-height:16px">2</div>
<div class="m" style="left:1328px;top:637px;line-height:16px">1</div>
<div class="m" style="left:1435px;top:637px;line-height:16px">0</div>
<div class="a" style="left:1001px;top:650px;width:518px;height:1px;background:#EFEFEF"></div>
<div class="a" style="left:1107px;top:125px;width:1px;height:527px;background:#EFEFEF"></div>
<div class="a" style="left:1214px;top:125px;width:1px;height:527px;background:#EFEFEF"></div>
<div class="a" style="left:1321px;top:125px;width:1px;height:527px;background:#EFEFEF"></div>
<div class="a" style="left:1428px;top:125px;width:1px;height:527px;background:#EFEFEF"></div>
<div class="a" style="left:1520px;top:106px;width:17px;height:547px;background:#F0F0F0"></div>
<svg style="left:1524px;top:111px" width="8" height="6" viewBox="0 0 8 6"><path d="M0.7 5.3 L4 1.8 L7.3 5.3" fill="none" stroke="#606060" stroke-width="2.1"/></svg>
<svg style="left:1524px;top:641px" width="8" height="6" viewBox="0 0 8 6"><path d="M0.7 0.7 L4 4.2 L7.3 0.7" fill="none" stroke="#606060" stroke-width="2.1"/></svg>
<div class="a" style="left:1520px;top:123px;width:15px;height:246px;background:#CDCDCD"></div>
<div class="a" style="left:1001px;top:653px;width:536px;height:16px;background:#F0F0F0"></div>
<svg style="left:1006px;top:657px" width="6" height="8" viewBox="0 0 6 8"><path d="M5.3 0.7 L1.8 4 L5.3 7.3" fill="none" stroke="#606060" stroke-width="2.1"/></svg>
<svg style="left:1508px;top:657px" width="6" height="8" viewBox="0 0 6 8"><path d="M0.7 0.7 L4.2 4 L0.7 7.3" fill="none" stroke="#606060" stroke-width="2.1"/></svg>
<div class="a" style="left:1018px;top:654px;width:470px;height:14px;background:#CDCDCD"></div>
<div class="a" style="left:999px;top:670px;width:547px;height:9px;background:#FDFDFE"></div>
<div class="a" style="left:1551px;top:73px;width:368px;height:948px;background:#F0F0F0"></div>
<div class="a" style="left:1551px;top:73px;width:368px;height:19px;background:linear-gradient(#BCCCDC,#D6E2EF)"></div>
<div class="t" style="left:1554.4px;top:76px;font-size:11.41px;letter-spacing:0.0px;line-height:15px;color:#000">Message Details</div>
<svg style="left:1872px;top:81px" width="10" height="6" viewBox="0 0 10 6"><path d="M0 0 H10 L5 5.5z" fill="#000"/></svg>
<svg style="left:1890px;top:79px" width="8" height="8" viewBox="0 0 8 9"><path d="M2 0.5 H6.5 M2 0.5 V5.5 M5.5 0.5 V5.5" fill="none" stroke="#000" stroke-width="1"/><rect x="5" y="0" width="1.6" height="5.5" fill="#000"/><rect x="0" y="5" width="8" height="1.3" fill="#000"/><rect x="3.3" y="6" width="1.4" height="3" fill="#000"/></svg>
<svg style="left:1906px;top:79px" width="9" height="7" viewBox="0 0 9 7"><path d="M0.9 0.5 L8.1 6.5 M8.1 0.5 L0.9 6.5" stroke="#000" stroke-width="1.75"/></svg>
<div class="a" style="left:1562px;top:104px;width:347px;height:905px;background:#fff;border-top:2px solid #6E6E6E;border-left:2px solid #6E6E6E;border-right:1px solid #E3E3E3;border-bottom:1px solid #E3E3E3"></div>
<div class="a" style="left:1562px;top:104px;width:347px;height:1px;background:#A0A0A0"></div>
<div class="a" style="left:1562px;top:104px;width:1px;height:905px;background:#A0A0A0"></div>
<div class="a" style="left:1564px;top:106px;width:343px;height:886px;overflow:hidden">
<div class="a" style="left:9px;top:18px;width:1px;height:83px;background:repeating-linear-gradient(#8C8C8C 0 1px,transparent 1px 2px)"></div>
<div class="a" style="left:28px;top:55px;width:1px;height:28px;background:repeating-linear-gradient(#8C8C8C 0 1px,transparent 1px 2px)"></div>
<div class="a" style="left:28px;top:109px;width:1px;height:136px;background:repeating-linear-gradient(#8C8C8C 0 1px,transparent 1px 2px)"></div>
<div class="a" style="left:47px;top:145px;width:1px;height:28px;background:repeating-linear-gradient(#8C8C8C 0 1px,transparent 1px 2px)"></div>
<div class="a" style="left:47px;top:199px;width:1px;height:28px;background:repeating-linear-gradient(#8C8C8C 0 1px,transparent 1px 2px)"></div>
<div class="a" style="left:47px;top:253px;width:1px;height:100px;background:repeating-linear-gradient(#8C8C8C 0 1px,transparent 1px 2px)"></div>
<div class="t" style="left:1.8px;top:1px;font-size:12.19px;letter-spacing:0.0px;line-height:16px">ClarinoxBlue Protocol Monitor</div>
<div class="a" style="left:10px;top:28px;width:8px;height:1px;background:repeating-linear-gradient(90deg,#8C8C8C 0 1px,transparent 1px 2px)"></div>
<div class="t" style="left:20.8px;top:18px;font-size:11.23px;letter-spacing:0.0px;line-height:16px">Text : (HCI_CMD) Sent LE Set Scan Enable</div>
<div class="a" style="left:10px;top:46px;width:8px;height:1px;background:repeating-linear-gradient(90deg,#8C8C8C 0 1px,transparent 1px 2px)"></div>
<div class="a" style="left:5px;top:42px;width:9px;height:9px;border:1px solid #919191;background:#fff"></div>
<div class="a" style="left:7px;top:46px;width:5px;height:1px;background:#000"></div>
<div class="t" style="left:20.8px;top:37px;font-size:11.88px;letter-spacing:0.0px;line-height:16px">Header</div>
<div class="a" style="left:29px;top:64px;width:8px;height:1px;background:repeating-linear-gradient(90deg,#8C8C8C 0 1px,transparent 1px 2px)"></div>
<div class="t" style="left:39.8px;top:54px;font-size:11.0px;letter-spacing:-0.148px;line-height:16px">Type : CLX_DEBUG_CLARINOX_BLUE_MONITOR_PDU_MESSAGE</div>
<div class="a" style="left:29px;top:82px;width:8px;height:1px;background:repeating-linear-gradient(90deg,#8C8C8C 0 1px,transparent 1px 2px)"></div>
<div class="t" style="left:39.8px;top:72px;font-size:11.41px;letter-spacing:0.0px;line-height:16px">TimeStamp : 00:00:07.934</div>
<div class="a" style="left:10px;top:100px;width:8px;height:1px;background:repeating-linear-gradient(90deg,#8C8C8C 0 1px,transparent 1px 2px)"></div>
<div class="a" style="left:5px;top:96px;width:9px;height:9px;border:1px solid #919191;background:#fff"></div>
<div class="a" style="left:7px;top:100px;width:5px;height:1px;background:#000"></div>
<div class="t" style="left:20.8px;top:90px;font-size:11.7px;letter-spacing:0.0px;line-height:16px">Packet</div>
<div class="a" style="left:29px;top:118px;width:8px;height:1px;background:repeating-linear-gradient(90deg,#8C8C8C 0 1px,transparent 1px 2px)"></div>
<div class="a" style="left:24px;top:114px;width:9px;height:9px;border:1px solid #919191;background:#fff"></div>
<div class="a" style="left:26px;top:118px;width:5px;height:1px;background:#000"></div>
<div class="a" style="left:28px;top:116px;width:1px;height:5px;background:#000"></div>
<div class="t" style="left:39.8px;top:108px;font-size:11.52px;letter-spacing:0.0px;line-height:16px">Frame 17: 6 bytes on wire (48 bits), 6 bytes captured (48 bits)</div>
<div class="a" style="left:29px;top:136px;width:8px;height:1px;background:repeating-linear-gradient(90deg,#8C8C8C 0 1px,transparent 1px 2px)"></div>
<div class="a" style="left:24px;top:132px;width:9px;height:9px;border:1px solid #919191;background:#fff"></div>
<div class="a" style="left:26px;top:136px;width:5px;height:1px;background:#000"></div>
<div class="t" style="left:39.8px;top:127px;font-size:12.3px;letter-spacing:0.056px;line-height:16px">Bluetooth</div>
<div class="a" style="left:48px;top:154px;width:8px;height:1px;background:repeating-linear-gradient(90deg,#8C8C8C 0 1px,transparent 1px 2px)"></div>
<div class="t" style="left:58.8px;top:144px;font-size:11.77px;letter-spacing:0.0px;line-height:16px">Source: host</div>
<div class="a" style="left:48px;top:172px;width:8px;height:1px;background:repeating-linear-gradient(90deg,#8C8C8C 0 1px,transparent 1px 2px)"></div>
<div class="t" style="left:58.8px;top:163px;font-size:12.19px;letter-spacing:0.0px;line-height:16px">Destination: controller</div>
<div class="a" style="left:29px;top:190px;width:8px;height:1px;background:repeating-linear-gradient(90deg,#8C8C8C 0 1px,transparent 1px 2px)"></div>
<div class="a" style="left:24px;top:186px;width:9px;height:9px;border:1px solid #919191;background:#fff"></div>
<div class="a" style="left:26px;top:190px;width:5px;height:1px;background:#000"></div>
<div class="t" style="left:39.8px;top:181px;font-size:12.11px;letter-spacing:0.0px;line-height:16px">Bluetooth HCI H4</div>
<div class="a" style="left:48px;top:208px;width:8px;height:1px;background:repeating-linear-gradient(90deg,#8C8C8C 0 1px,transparent 1px 2px)"></div>
<div class="t" style="left:58.8px;top:198px;font-size:11.56px;letter-spacing:0.0px;line-height:16px">Direction: Sent (0x00)</div>
<div class="a" style="left:48px;top:226px;width:8px;height:1px;background:repeating-linear-gradient(90deg,#8C8C8C 0 1px,transparent 1px 2px)"></div>
<div class="t" style="left:58.8px;top:216px;font-size:11.7px;letter-spacing:0.0px;line-height:16px">HCI Packet Type: HCI Command (0x01)</div>
<div class="a" style="left:29px;top:244px;width:8px;height:1px;background:repeating-linear-gradient(90deg,#8C8C8C 0 1px,transparent 1px 2px)"></div>
<div class="a" style="left:24px;top:240px;width:9px;height:9px;border:1px solid #919191;background:#fff"></div>
<div class="a" style="left:26px;top:244px;width:5px;height:1px;background:#000"></div>
<div class="t" style="left:39.8px;top:234px;font-size:11.66px;letter-spacing:0.0px;line-height:16px">Bluetooth HCI Command - LE Set Scan Enable</div>
<div class="a" style="left:48px;top:262px;width:8px;height:1px;background:repeating-linear-gradient(90deg,#8C8C8C 0 1px,transparent 1px 2px)"></div>
<div class="a" style="left:43px;top:258px;width:9px;height:9px;border:1px solid #919191;background:#fff"></div>
<div class="a" style="left:45px;top:262px;width:5px;height:1px;background:#000"></div>
<div class="a" style="left:47px;top:260px;width:1px;height:5px;background:#000"></div>
<div class="t" style="left:58.8px;top:252px;font-size:11.41px;letter-spacing:0.0px;line-height:16px">Command Opcode: LE Set Scan Enable (0x200c)</div>
<div class="a" style="left:48px;top:280px;width:8px;height:1px;background:repeating-linear-gradient(90deg,#8C8C8C 0 1px,transparent 1px 2px)"></div>
<div class="t" style="left:58.8px;top:271px;font-size:11.94px;letter-spacing:0.0px;line-height:16px">Parameter Total Length: 2</div>
<div class="a" style="left:48px;top:298px;width:8px;height:1px;background:repeating-linear-gradient(90deg,#8C8C8C 0 1px,transparent 1px 2px)"></div>
<div class="t" style="left:58.8px;top:288px;font-size:11.3px;letter-spacing:0.0px;line-height:16px">Scan Enable: true (0x01)</div>
<div class="a" style="left:48px;top:316px;width:8px;height:1px;background:repeating-linear-gradient(90deg,#8C8C8C 0 1px,transparent 1px 2px)"></div>
<div class="t" style="left:58.8px;top:306px;font-size:11.61px;letter-spacing:0.0px;line-height:16px">Filter Duplicates: true (0x01)</div>
<div class="a" style="left:48px;top:334px;width:8px;height:1px;background:repeating-linear-gradient(90deg,#8C8C8C 0 1px,transparent 1px 2px)"></div>
<div class="t" style="left:58.8px;top:324px;font-size:11.55px;letter-spacing:0.0px;line-height:16px">Response in frame: 18</div>
<div class="a" style="left:48px;top:352px;width:8px;height:1px;background:repeating-linear-gradient(90deg,#8C8C8C 0 1px,transparent 1px 2px)"></div>
<div class="t" style="left:58.8px;top:342px;font-size:11.7px;letter-spacing:0.0px;line-height:16px">Command-Response Delta: 0.03ms</div>
</div>
<div class="a" style="left:1564px;top:991px;width:344px;height:17px;background:#F0F0F0"></div>
<svg style="left:1568px;top:995px" width="6" height="8" viewBox="0 0 6 8"><path d="M5.3 0.7 L1.8 4 L5.3 7.3" fill="none" stroke="#606060" stroke-width="2.1"/></svg>
<svg style="left:1896px;top:995px" width="6" height="8" viewBox="0 0 6 8"><path d="M0.7 0.7 L4.2 4 L0.7 7.3" fill="none" stroke="#606060" stroke-width="2.1"/></svg>
<div class="a" style="left:1581px;top:992px;width:245px;height:15px;background:#CDCDCD"></div>
<div class="a" style="left:0px;top:680px;width:1551px;height:4px;background:#EEF1FA"></div>
<div class="a" style="left:0px;top:684px;width:773px;height:337px;background:#F0F0F0"></div>
<div class="a" style="left:0px;top:684px;width:773px;height:19px;background:linear-gradient(#BCCCDC,#D6E2EF)"></div>
<div class="t" style="left:3.4px;top:687px;font-size:11.22px;letter-spacing:0.0px;line-height:15px;color:#000">Lua Command Line</div>
<svg style="left:725px;top:692px" width="10" height="6" viewBox="0 0 10 6"><path d="M0 0 H10 L5 5.5z" fill="#000"/></svg>
<svg style="left:743px;top:690px" width="8" height="8" viewBox="0 0 8 9"><path d="M2 0.5 H6.5 M2 0.5 V5.5 M5.5 0.5 V5.5" fill="none" stroke="#000" stroke-width="1"/><rect x="5" y="0" width="1.6" height="5.5" fill="#000"/><rect x="0" y="5" width="8" height="1.3" fill="#000"/><rect x="3.3" y="6" width="1.4" height="3" fill="#000"/></svg>
<svg style="left:759px;top:690px" width="9" height="7" viewBox="0 0 9 7"><path d="M0.9 0.5 L8.1 6.5 M8.1 0.5 L0.9 6.5" stroke="#000" stroke-width="1.75"/></svg>
<div class="a" style="left:777px;top:684px;width:770px;height:337px;background:#F0F0F0"></div>
<div class="a" style="left:777px;top:684px;width:770px;height:19px;background:linear-gradient(#BCCCDC,#D6E2EF)"></div>
<div class="t" style="left:780.4px;top:687px;font-size:11.86px;letter-spacing:0.0px;line-height:15px;color:#000">Virtual Console</div>
<svg style="left:1499px;top:692px" width="10" height="6" viewBox="0 0 10 6"><path d="M0 0 H10 L5 5.5z" fill="#000"/></svg>
<svg style="left:1517px;top:690px" width="8" height="8" viewBox="0 0 8 9"><path d="M2 0.5 H6.5 M2 0.5 V5.5 M5.5 0.5 V5.5" fill="none" stroke="#000" stroke-width="1"/><rect x="5" y="0" width="1.6" height="5.5" fill="#000"/><rect x="0" y="5" width="8" height="1.3" fill="#000"/><rect x="3.3" y="6" width="1.4" height="3" fill="#000"/></svg>
<svg style="left:1533px;top:690px" width="9" height="7" viewBox="0 0 9 7"><path d="M0.9 0.5 L8.1 6.5 M8.1 0.5 L0.9 6.5" stroke="#000" stroke-width="1.75"/></svg>
<div class="a" style="left:773px;top:684px;width:4px;height:337px;background:#EEF1FA"></div>
<div class="a" style="left:1547px;top:684px;width:4px;height:337px;background:#EEF1FA"></div>
<div class="a" style="left:11px;top:715px;width:751px;height:294px;background:#fff;border-top:2px solid #6E6E6E;border-left:2px solid #6E6E6E;border-right:1px solid #E3E3E3;border-bottom:1px solid #E3E3E3"></div>
<div class="a" style="left:11px;top:715px;width:751px;height:1px;background:#A0A0A0"></div>
<div class="a" style="left:11px;top:715px;width:1px;height:294px;background:#A0A0A0"></div>
<div class="a" style="left:13px;top:717px;width:731px;height:291px;overflow:hidden">
<div class="t" style="left:13.2px;top:-9px;font-size:12px;letter-spacing:0px;line-height:16px;color:#0000F0">cd.help()</div>
<div class="t" style="left:13.2px;top:6px;font-size:11.64px;letter-spacing:0.0px;line-height:16px;color:#0000F0">cd.async_call()</div>
<div class="t" style="left:0.7px;top:36px;font-size:12.2px;letter-spacing:0.0px;line-height:16px;color:#0000F0">Call cd.help(&quot;function_name&quot;) with cd. prefix removed from the function name in order to</div>
<div class="t" style="left:0.7px;top:51px;font-size:11.98px;letter-spacing:0.0px;line-height:16px;color:#0000F0">get a description of each function ( e.g. cd.help(&quot;match.createRule&quot;) ) .</div>
<div class="t" style="left:0.7px;top:96px;font-size:12.0px;letter-spacing:0.0px;line-height:16px;color:#0000F0">The module &quot;cparser&quot; loaded.</div>
<div class="t" style="left:0.7px;top:111px;font-size:11.86px;letter-spacing:0.0px;line-height:16px;color:#0000F0">The module &quot;xavante.xavante&quot; loaded.</div>
<div class="t" style="left:0.7px;top:126px;font-size:12.06px;letter-spacing:0.0px;line-height:16px;color:#0000F0">The module &quot;bin2CArray&quot; loaded.</div>
<div class="t" style="left:0.7px;top:141px;font-size:12.16px;letter-spacing:0.0px;line-height:16px;color:#0000F0">The module &quot;luac&quot; loaded.</div>
<div class="t" style="left:0.7px;top:156px;font-size:12.05px;letter-spacing:0.0px;line-height:16px;color:#0000F0">The module &quot;PackedCodecGenerator&quot; not found.</div>
<div class="t" style="left:0.7px;top:171px;font-size:11.8px;letter-spacing:0.0px;line-height:16px;color:#0000F0">The module &quot;cd_message_browser&quot; loaded.</div>
<div class="t" style="left:0.7px;top:186px;font-size:12.19px;letter-spacing:0.0px;line-height:16px;color:#0000F0">The module &quot;cd_bluetooth&quot; loaded.</div>
<div class="t" style="left:0.7px;top:201px;font-size:12.2px;letter-spacing:0.0px;line-height:16px;color:#0000F0">The module &quot;cd_wifi&quot; loaded.</div>
<div class="t" style="left:0.7px;top:216px;font-size:12.17px;letter-spacing:0.0px;line-height:16px;color:#0000F0">The module &quot;cd_memory&quot; loaded.</div>
<div class="t" style="left:0.7px;top:246px;font-size:12.13px;letter-spacing:0.0px;line-height:16px;color:#0000F0">--- cd_init.lua END</div>
<div class="t" style="left:1px;top:276px;font-size:11.5px;line-height:16px;color:#9B00E6">&gt;</div>
</div>
<div class="a" style="left:744px;top:717px;width:17px;height:291px;background:#F0F0F0"></div>
<svg style="left:748px;top:723px" width="8" height="6" viewBox="0 0 8 6"><path d="M0.7 5.3 L4 1.8 L7.3 5.3" fill="none" stroke="#606060" stroke-width="2.1"/></svg>
<svg style="left:748px;top:996px" width="8" height="6" viewBox="0 0 8 6"><path d="M0.7 0.7 L4 4.2 L7.3 0.7" fill="none" stroke="#606060" stroke-width="2.1"/></svg>
<div class="a" style="left:745px;top:933px;width:15px;height:57px;background:#CDCDCD"></div>
<div class="a" style="left:788px;top:715px;width:747px;height:294px;background:#000;border-top:2px solid #6E6E6E;border-left:2px solid #6E6E6E;border-right:1px solid #E3E3E3;border-bottom:1px solid #E3E3E3"></div>
<div class="a" style="left:788px;top:715px;width:747px;height:1px;background:#A0A0A0"></div>
<div class="a" style="left:788px;top:715px;width:1px;height:294px;background:#A0A0A0"></div>
<div class="a" style="left:790px;top:717px;width:727px;height:291px;overflow:hidden">
<div class="t" style="left:13.0px;top:1px;font-size:11.3px;line-height:16px;color:#FFFF00">2.</div>
<div class="t" style="left:25.0px;top:1px;font-size:12.1px;letter-spacing:0.016px;line-height:16px;color:#90EE90">Terminate Bluetooth Stack</div>
<div class="t" style="left:13.0px;top:16px;font-size:11.3px;line-height:16px;color:#FFFF00">3.</div>
<div class="t" style="left:25.0px;top:16px;font-size:11.73px;letter-spacing:0.0px;line-height:16px;color:#90EE90">Start Scanning</div>
<div class="t" style="left:13.0px;top:31px;font-size:11.3px;line-height:16px;color:#FFFF00">4.</div>
<div class="t" style="left:25.0px;top:31px;font-size:11.83px;letter-spacing:0.0px;line-height:16px;color:#90EE90">Stop Scanning</div>
<div class="t" style="left:13.0px;top:46px;font-size:11.3px;line-height:16px;color:#FFFF00">5.</div>
<div class="t" style="left:25.0px;top:46px;font-size:11.92px;letter-spacing:0.0px;line-height:16px;color:#90EE90">Connect to a discovered device</div>
<div class="t" style="left:13.0px;top:61px;font-size:11.3px;line-height:16px;color:#FFFF00">6.</div>
<div class="t" style="left:25.0px;top:61px;font-size:11.88px;letter-spacing:0.0px;line-height:16px;color:#90EE90">Initiate Legacy Pairing</div>
<div class="t" style="left:13.0px;top:76px;font-size:11.3px;line-height:16px;color:#FFFF00">7.</div>
<div class="t" style="left:25.0px;top:76px;font-size:11.73px;letter-spacing:0.0px;line-height:16px;color:#90EE90">Initiate Secure Pairing</div>
<div class="t" style="left:13.0px;top:91px;font-size:11.3px;line-height:16px;color:#FFFF00">8.</div>
<div class="t" style="left:25.0px;top:91px;font-size:11.91px;letter-spacing:0.0px;line-height:16px;color:#90EE90">Start Encryption</div>
<div class="t" style="left:13.0px;top:106px;font-size:11.3px;line-height:16px;color:#FFFF00">9.</div>
<div class="t" style="left:25.0px;top:106px;font-size:12.1px;letter-spacing:0.023px;line-height:16px;color:#90EE90">Disconnect from the device</div>
<div class="t" style="left:13.0px;top:121px;font-size:11.3px;line-height:16px;color:#FFFF00">10.</div>
<div class="t" style="left:31.2px;top:121px;font-size:11.86px;letter-spacing:0.0px;line-height:16px;color:#90EE90">Select Active GATT Client</div>
<div class="t" style="left:13.0px;top:136px;font-size:11.3px;line-height:16px;color:#FFFF00">11.</div>
<div class="t" style="left:31.2px;top:136px;font-size:11.62px;letter-spacing:0.0px;line-height:16px;color:#90EE90">Discover All Primary Services</div>
<div class="t" style="left:13.0px;top:151px;font-size:11.3px;line-height:16px;color:#FFFF00">12.</div>
<div class="t" style="left:31.2px;top:151px;font-size:11.67px;letter-spacing:0.0px;line-height:16px;color:#90EE90">Discover All Characteristics of a Service</div>
<div class="t" style="left:13.0px;top:166px;font-size:11.3px;line-height:16px;color:#FFFF00">13.</div>
<div class="t" style="left:31.2px;top:166px;font-size:11.78px;letter-spacing:0.0px;line-height:16px;color:#90EE90">Discover All Descriptors of a Characteristic</div>
<div class="t" style="left:13.0px;top:181px;font-size:11.3px;line-height:16px;color:#FFFF00">14.</div>
<div class="t" style="left:31.2px;top:181px;font-size:11.91px;letter-spacing:0.0px;line-height:16px;color:#90EE90">Enable Notifications for a Characteristic</div>
<div class="t" style="left:13.0px;top:196px;font-size:11.3px;line-height:16px;color:#FFFF00">15.</div>
<div class="t" style="left:31.2px;top:196px;font-size:11.8px;letter-spacing:0.0px;line-height:16px;color:#90EE90">Enable Indications for a Characteristic</div>
<div class="t" style="left:13.0px;top:211px;font-size:11.3px;line-height:16px;color:#FFFF00">16.</div>
<div class="t" style="left:31.2px;top:211px;font-size:11.97px;letter-spacing:0.0px;line-height:16px;color:#90EE90">Read Attribute Value</div>
<div class="t" style="left:13.0px;top:226px;font-size:11.3px;line-height:16px;color:#FFFF00">17.</div>
<div class="t" style="left:31.2px;top:226px;font-size:12.1px;letter-spacing:0.111px;line-height:16px;color:#90EE90">Write Attribute Value</div>
<div class="t" style="left:13.0px;top:241px;font-size:11.3px;line-height:16px;color:#FFFF00">18.</div>
<div class="t" style="left:31.2px;top:241px;font-size:11.88px;letter-spacing:0.0px;line-height:16px;color:#90EE90">Get active connection Details</div>
<div class="t" style="left:13.0px;top:256px;font-size:11.3px;line-height:16px;color:#FFFF00">19.</div>
<div class="t" style="left:31.2px;top:256px;font-size:11.94px;letter-spacing:0.0px;line-height:16px;color:#90EE90">Connect to a paired device</div>
<div class="t" style="left:13.0px;top:271px;font-size:11.3px;line-height:16px;color:#FFFF00">20.</div>
<div class="t" style="left:31.2px;top:271px;font-size:11.8px;letter-spacing:0.0px;line-height:16px;color:#90EE90">Delete paired device Info</div>
<div class="t" style="left:13.0px;top:286px;font-size:11.3px;line-height:16px;color:#FFFF00">21.</div>
<div class="t" style="left:31.2px;top:286px;font-size:11.7px;letter-spacing:0px;line-height:16px;color:#90EE90">Delete All paired devices</div>
</div>
<div class="a" style="left:1517px;top:717px;width:17px;height:291px;background:#F0F0F0"></div>
<svg style="left:1522px;top:723px" width="8" height="6" viewBox="0 0 8 6"><path d="M0.7 5.3 L4 1.8 L7.3 5.3" fill="none" stroke="#606060" stroke-width="2.1"/></svg>
<svg style="left:1522px;top:996px" width="8" height="6" viewBox="0 0 8 6"><path d="M0.7 0.7 L4 4.2 L7.3 0.7" fill="none" stroke="#606060" stroke-width="2.1"/></svg>
<div class="a" style="left:1518px;top:971px;width:15px;height:17px;background:#CDCDCD"></div>
<div class="a" style="left:0px;top:1021px;width:1919px;height:20px;background:#F0F0F0;border-top:1px solid #D9D9D9"></div>
<div class="a" style="left:0px;top:1040px;width:1919px;height:1px;background:#3D7BB0"></div>
<div class="a" style="left:775px;top:1023px;width:1px;height:16px;background:#D4D4D4"></div>
<div class="a" style="left:1261px;top:1023px;width:1px;height:16px;background:#D4D4D4"></div>
<div class="a" style="left:1459px;top:1023px;width:1px;height:16px;background:#D4D4D4"></div>
<div class="a" style="left:1657px;top:1023px;width:1px;height:16px;background:#D4D4D4"></div>
<div class="t" style="left:6.7px;top:1025px;font-size:11.39px;letter-spacing:0.0px;line-height:15px;color:#3A3A3A">&lt;No Active Comm Interface&gt;</div>
<div class="t" style="left:779.7px;top:1025px;font-size:11.3px;letter-spacing:0.0px;line-height:15px;color:#000">Session 2</div>
<div class="t" style="left:1265.4px;top:1025px;font-size:11.14px;letter-spacing:0.0px;line-height:15px;color:#000">00:25:54</div>
<div class="t" style="left:1462.4px;top:1025px;font-size:11.0px;letter-spacing:-0.016px;line-height:15px;color:#000">%100 Processed</div>
<div class="t" style="left:1661.4px;top:1025px;font-size:11.0px;letter-spacing:-0.144px;line-height:15px;color:#000">771 KB Received</div>
</body></html>
